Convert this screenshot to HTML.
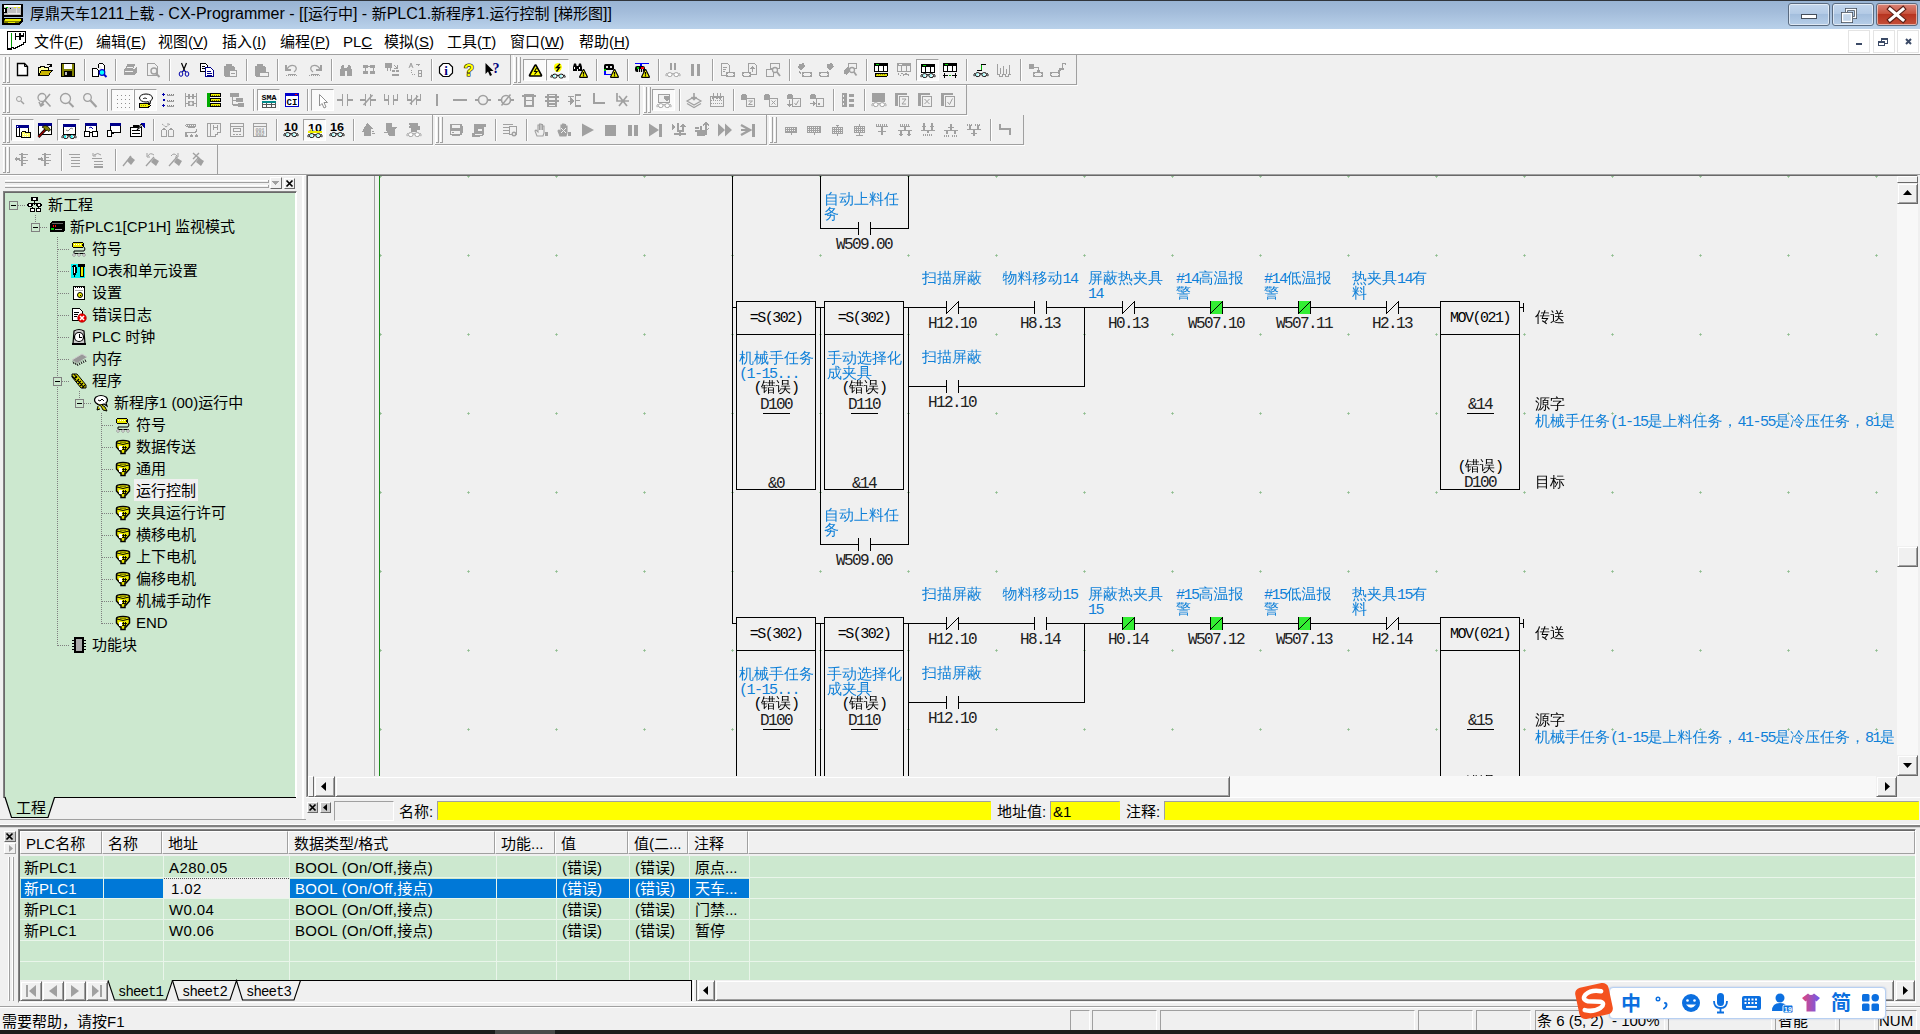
<!DOCTYPE html><html lang="zh-CN"><head><meta charset="utf-8"><title>CX-Programmer</title><style>
html,body{margin:0;padding:0;}
body{width:1920px;height:1034px;overflow:hidden;position:relative;background:#f0f0f0;
 font-family:"Liberation Sans","Noto Sans CJK SC",sans-serif;font-size:15px;color:#000;}
div,svg{position:absolute;box-sizing:border-box;}
.t{white-space:nowrap;line-height:1;}
.ui{font-family:"Liberation Sans","Noto Sans CJK SC",sans-serif;font-size:15px;}
.ss{font-family:"Liberation Mono","WenQuanYi Zen Hei",monospace;font-size:15px;letter-spacing:-1.5px;line-height:15px;}
.ss.k{font-size:15px;letter-spacing:0;}
.l{font-family:"Liberation Mono",monospace;font-size:15px;letter-spacing:-1.5px;}
.ad{font-family:"Liberation Mono","WenQuanYi Zen Hei",monospace;font-size:16px;letter-spacing:-1.6px;line-height:15px;color:#202020;}
.cm{font-family:"Liberation Mono","WenQuanYi Zen Hei",monospace;font-size:15px;line-height:15px;color:#1080d8;}
u{text-decoration:underline;text-underline-offset:1px;}
svg{overflow:visible;}
</style></head><body>
<div style="left:0px;top:0px;width:1920px;height:29px;background:linear-gradient(#98b3d3 0%,#a3bcda 40%,#b9d1ea 100%);"></div>
<div style="left:0px;top:0px;width:1920px;height:1px;background:#30343a;"></div>
<svg style="left:2px;top:3px" width="22" height="22" viewBox="0 0 22 22" shape-rendering="crispEdges">
<rect x="1" y="2" width="19" height="11" fill="#c0c0c0" stroke="#000" stroke-width="2"/>
<rect x="2" y="2" width="17" height="2" fill="#fff"/><rect x="2" y="1" width="16" height="1" fill="#000"/>
<rect x="4" y="4" width="2" height="1" fill="#0c0"/><rect x="12" y="4" width="2" height="1" fill="#ee0"/><rect x="16" y="4" width="2" height="1" fill="#ee0"/>
<rect x="2" y="5" width="3" height="5" fill="#000"/><rect x="2" y="6" width="1" height="3" fill="#fff"/><rect x="8" y="5" width="1" height="1" fill="#000"/>
<rect x="6" y="10" width="12" height="1" fill="#e8e8e8"/><rect x="14" y="5" width="1" height="5" fill="#e0e0e0"/>
<polygon points="1,16 20,16 20,18 17,21 1,21" fill="#808000" stroke="#000" stroke-width="2"/>
<rect x="3" y="16" width="16" height="2" fill="#ee0"/><rect x="6" y="19" width="7" height="1" fill="#ee0"/>
<rect x="0" y="12" width="2" height="5" fill="#000"/>
</svg>
<div class="t ui" style="left:30px;top:5px;height:18px;line-height:18px;font-size:15px;">厚鼎天车<span style="font-size:16px">1211</span>上载 <span style="font-size:16px">- CX-Programmer - [[</span>运行中<span style="font-size:16px">] - </span>新<span style="font-size:16px">PLC1.</span>新程序<span style="font-size:16px">1.</span>运行控制 <span style="font-size:16px">[</span>梯形图<span style="font-size:16px">]]</span></div>
<div style="left:1788px;top:3px;width:42px;height:23px;background:linear-gradient(#c3d6ec 0%,#b4cbe6 45%,#a3bedd 50%,#b7cee8 100%);border:1px solid #5a6b80;border-radius:3px;box-shadow:inset 0 0 0 1px rgba(255,255,255,.55);"></div>
<div style="left:1832px;top:3px;width:42px;height:23px;background:linear-gradient(#c3d6ec 0%,#b4cbe6 45%,#a3bedd 50%,#b7cee8 100%);border:1px solid #5a6b80;border-radius:3px;box-shadow:inset 0 0 0 1px rgba(255,255,255,.55);"></div>
<div style="left:1876px;top:3px;width:42px;height:23px;background:linear-gradient(#d9867a 0%,#c9543f 45%,#b73420 50%,#c4503a 100%);border:1px solid #5a6b80;border-radius:3px;box-shadow:inset 0 0 0 1px rgba(255,255,255,.55);"></div>
<svg style="left:1788px;top:3px" width="130" height="23" viewBox="0 0 130 23">
<rect x="13.5" y="11.5" width="15" height="4" fill="#fff" stroke="#454f5c" stroke-width="1"/>
<rect x="58.500" y="6.500" width="9" height="8" fill="none" stroke="#454f5c" stroke-width="3"/><rect x="58.500" y="6.500" width="9" height="8" fill="none" stroke="#fff" stroke-width="1.4"/>
<rect x="54.500" y="10.500" width="9" height="8" fill="#b4cbe6" stroke="#454f5c" stroke-width="3"/><rect x="54.500" y="10.500" width="9" height="8" fill="#c4d6ea" stroke="#fff" stroke-width="1.4"/>
<path d="M102 6 L115 17 M115 6 L102 17" stroke="#5b2018" stroke-width="5.2" stroke-linecap="square"/>
<path d="M102 6 L115 17 M115 6 L102 17" stroke="#fff" stroke-width="3" stroke-linecap="square"/>
</svg>
<div style="left:0px;top:29px;width:1920px;height:25px;background:#fff;"></div>
<div style="left:0px;top:54px;width:1920px;height:1px;background:#a0a0a0;"></div>
<svg style="left:7px;top:31px" width="19" height="19" viewBox="0 0 19 19" shape-rendering="crispEdges">
<path d="M0.500 0.500 H18.500 V11.500 H16.500 V13.500 H14.500 V14.500 H12.500 V15.500 H10.500 V16.500 H8.500 V17.500 H6.500 V16.500 H4.500 V18.500 H0.500 Z" fill="#fff" stroke="#000" stroke-width="1"/>
<rect x="4" y="2" width="1" height="14" fill="#090"/>
<rect x="8" y="2" width="1" height="7" fill="#000"/><rect x="12" y="2" width="2" height="7" fill="#000"/><rect x="8" y="5" width="5" height="1" fill="#000"/>
<rect x="13" y="4" width="4" height="2" fill="#000"/><rect x="16" y="2" width="1" height="4" fill="#000"/>
<rect x="0" y="17" width="5" height="2" fill="#000"/><rect x="6" y="17" width="3" height="1" fill="#000"/>
</svg>
<div class="t ui" style="left:34px;top:33px;height:18px;line-height:18px;">文件(<u>F</u>)</div>
<div class="t ui" style="left:96px;top:33px;height:18px;line-height:18px;">编辑(<u>E</u>)</div>
<div class="t ui" style="left:158px;top:33px;height:18px;line-height:18px;">视图(<u>V</u>)</div>
<div class="t ui" style="left:222px;top:33px;height:18px;line-height:18px;">插入(<u>I</u>)</div>
<div class="t ui" style="left:280px;top:33px;height:18px;line-height:18px;">编程(<u>P</u>)</div>
<div class="t ui" style="left:343px;top:33px;height:18px;line-height:18px;">PL<u>C</u></div>
<div class="t ui" style="left:384px;top:33px;height:18px;line-height:18px;">模拟(<u>S</u>)</div>
<div class="t ui" style="left:447px;top:33px;height:18px;line-height:18px;">工具(<u>T</u>)</div>
<div class="t ui" style="left:510px;top:33px;height:18px;line-height:18px;">窗口(<u>W</u>)</div>
<div class="t ui" style="left:579px;top:33px;height:18px;line-height:18px;">帮助(<u>H</u>)</div>
<div style="left:1848px;top:30px;width:22px;height:23px;background:#fff;border:1px solid #e4e4e4;"></div>
<div style="left:1873px;top:30px;width:22px;height:23px;background:#fff;border:1px solid #e4e4e4;"></div>
<div style="left:1897px;top:30px;width:22px;height:23px;background:#fff;border:1px solid #e4e4e4;"></div>
<svg style="left:1848px;top:30px" width="72" height="23" viewBox="0 0 72 23" shape-rendering="crispEdges">
<rect x="8" y="13" width="6" height="2" fill="#3b4a66"/>
<rect x="33.500" y="8.500" width="6" height="5" fill="none" stroke="#3b4a66"/><rect x="33" y="8" width="7" height="2" fill="#3b4a66"/>
<rect x="30.500" y="11.500" width="6" height="4" fill="#fff" stroke="#3b4a66"/><rect x="30" y="11" width="7" height="2" fill="#3b4a66"/>
<path d="M58 9 L63 14 M63 9 L58 14" stroke="#3b4a66" stroke-width="2" shape-rendering="auto"/>
</svg>
<div style="left:510px;top:55px;width:1px;height:30px;background:#a0a0a0;"></div>
<div style="left:2px;top:84px;width:509px;height:1px;background:#a0a0a0;"></div>
<div style="left:2px;top:85px;width:510px;height:1px;background:#fff;"></div>
<div style="left:3px;top:57px;width:1px;height:25px;background:#fff;"></div>
<div style="left:5px;top:57px;width:1px;height:26px;background:#a0a0a0;"></div>
<div style="left:3px;top:82px;width:3px;height:1px;background:#a0a0a0;"></div>
<div style="left:7px;top:57px;width:1px;height:25px;background:#fff;"></div>
<div style="left:9px;top:57px;width:1px;height:26px;background:#a0a0a0;"></div>
<div style="left:7px;top:82px;width:3px;height:1px;background:#a0a0a0;"></div>
<svg style="left:14px;top:62px" width="16" height="16" viewBox="0 0 16 16" shape-rendering="crispEdges"><path d="M3.500 1.500 H10.500 L13.500 4.500 V13.500 H3.500 Z" fill="#fff" stroke="#000" stroke-width="1.400" shape-rendering="auto"/><path d="M10.500 1.500 V4.500 H13.500" fill="none" stroke="#000" shape-rendering="auto"/></svg>
<svg style="left:37px;top:62px" width="16" height="16" viewBox="0 0 16 16" shape-rendering="crispEdges"><path d="M1.500 13.500 V5.500 H3 L4 4.500 H7 L8 5.500 H11.500 V8" fill="#ffffa0" stroke="#000"/><path d="M1.500 13.500 L4.500 8.500 H15 L11.500 13.500 Z" fill="#c8b400" stroke="#000"/><path d="M10 3 Q12.500 1 14 3.500 M14.500 1.500 V4 H12" fill="none" stroke="#000"/></svg>
<svg style="left:60px;top:62px" width="16" height="16" viewBox="0 0 16 16" shape-rendering="crispEdges"><rect x="1.500" y="1.500" width="13" height="13" fill="#808000" stroke="#000"/><rect x="4" y="2" width="8" height="5" fill="#fff"/><rect x="4" y="9" width="8" height="5" fill="#000"/><rect x="5" y="10" width="2" height="3" fill="#c0c0c0"/></svg>
<div style="left:84px;top:59px;width:1px;height:22px;background:#a0a0a0;"></div>
<div style="left:85px;top:59px;width:1px;height:22px;background:#fff;"></div>
<svg style="left:91px;top:62px" width="16" height="16" viewBox="0 0 16 16" shape-rendering="crispEdges"><path d="M1.500 6.500 H5.500 L7.500 8.500 V14.500 H1.500 Z" fill="#fff" stroke="#000"/><path d="M7.500 1.500 H11.500 L13.500 3.500 V9 M7.500 1.500 V6" fill="#fff" stroke="#000"/><circle cx="11" cy="10.500" r="2.800" fill="#0ff" stroke="#00c" stroke-width="1.2" shape-rendering="auto"/><path d="M13 12.500 L15.500 15" stroke="#00c" stroke-width="2" shape-rendering="auto"/></svg>
<div style="left:115px;top:59px;width:1px;height:22px;background:#a0a0a0;"></div>
<div style="left:116px;top:59px;width:1px;height:22px;background:#fff;"></div>
<svg style="left:122px;top:62px" width="16" height="16" viewBox="0 0 16 16" shape-rendering="crispEdges"><path d="M4 6 L6 2 H13 L11 6 Z" fill="#f0f0f0" stroke="#a0a0a0"/><path d="M1.500 7 H12.500 L15 5 V10 L12.500 13 H1.500 Z" fill="#a0a0a0"/><rect x="3" y="9" width="8" height="1" fill="#f0f0f0"/><path d="M5 4 H11 M6 3 H12" stroke="#a0a0a0" /></svg>
<svg style="left:145px;top:62px" width="16" height="16" viewBox="0 0 16 16" shape-rendering="crispEdges"><path d="M2.500 1.500 H9.500 L12.500 4.500 V13.500 H2.500 Z" fill="#f0f0f0" stroke="#a0a0a0"/><circle cx="9" cy="9" r="3" fill="#f0f0f0" stroke="#a0a0a0" stroke-width="1.4" shape-rendering="auto"/><path d="M11 11.500 L14.500 15" stroke="#a0a0a0" stroke-width="2" shape-rendering="auto"/></svg>
<div style="left:169px;top:59px;width:1px;height:22px;background:#a0a0a0;"></div>
<div style="left:170px;top:59px;width:1px;height:22px;background:#fff;"></div>
<svg style="left:176px;top:62px" width="16" height="16" viewBox="0 0 16 16" shape-rendering="crispEdges"><path d="M5.500 1 L9 9.500 M10.500 1 L7 9.500" stroke="#000" stroke-width="1.200" shape-rendering="auto" fill="none"/><ellipse cx="5" cy="12" rx="1.800" ry="2.300" fill="none" stroke="#00a" stroke-width="1" shape-rendering="auto"/><ellipse cx="11" cy="12" rx="1.800" ry="2.300" fill="none" stroke="#00a" stroke-width="1" shape-rendering="auto"/><path d="M6 10 L8 8 L10 10" stroke="#00a" fill="none" shape-rendering="auto"/></svg>
<svg style="left:199px;top:62px" width="16" height="16" viewBox="0 0 16 16" shape-rendering="crispEdges"><path d="M1.500 1.500 H6.500 L8.500 3.500 V9.500 H1.500 Z" fill="#fff" stroke="#000"/><path d="M3 4 H6 M3 6 H7" stroke="#000"/><path d="M6.500 5.500 H11.500 L14.500 8.500 V14.500 H6.500 Z" fill="#fff" stroke="#008"/><path d="M8 9 H12 M8 11 H13 M8 13 H13" stroke="#008"/></svg>
<svg style="left:222px;top:62px" width="16" height="16" viewBox="0 0 16 16" shape-rendering="crispEdges"><rect x="1.500" y="3.500" width="11" height="11" rx="1" fill="#a0a0a0"/><rect x="4" y="1.500" width="6" height="3" fill="#a0a0a0"/><rect x="7.500" y="8.500" width="7" height="6" fill="#f0f0f0" stroke="#a0a0a0"/><path d="M9 11 H13" stroke="#a0a0a0"/></svg>
<div style="left:246px;top:59px;width:1px;height:22px;background:#a0a0a0;"></div>
<div style="left:247px;top:59px;width:1px;height:22px;background:#fff;"></div>
<svg style="left:253px;top:62px" width="16" height="16" viewBox="0 0 16 16" shape-rendering="crispEdges"><rect x="1.500" y="3.500" width="11" height="11" rx="1" fill="#a0a0a0"/><rect x="4" y="1.500" width="6" height="3" fill="#a0a0a0"/><rect x="6.500" y="10.500" width="9" height="4" rx="1" fill="#f0f0f0" stroke="#a0a0a0"/></svg>
<div style="left:277px;top:59px;width:1px;height:22px;background:#a0a0a0;"></div>
<div style="left:278px;top:59px;width:1px;height:22px;background:#fff;"></div>
<svg style="left:284px;top:62px" width="16" height="16" viewBox="0 0 16 16" shape-rendering="crispEdges"><path d="M3 7 Q6 2 11 4 Q14 7 10 10" fill="none" stroke="#a0a0a0" stroke-width="1.3" shape-rendering="auto"/><path d="M2 3 V8 H7" fill="none" stroke="#a0a0a0" stroke-width="1.3"/><path d="M2 13.500 H14" stroke="#a0a0a0" stroke-dasharray="1 1"/><path d="M4 12.500 H12" stroke="#a0a0a0"/></svg>
<svg style="left:307px;top:62px" width="16" height="16" viewBox="0 0 16 16" shape-rendering="crispEdges"><path d="M13 7 Q10 2 5 4 Q2 7 6 10" fill="none" stroke="#a0a0a0" stroke-width="1.3" shape-rendering="auto"/><path d="M14 3 V8 H9" fill="none" stroke="#a0a0a0" stroke-width="1.3"/><path d="M2 13.500 H14" stroke="#a0a0a0" stroke-dasharray="1 1"/><path d="M4 12.500 H12" stroke="#a0a0a0"/></svg>
<div style="left:331px;top:59px;width:1px;height:22px;background:#a0a0a0;"></div>
<div style="left:332px;top:59px;width:1px;height:22px;background:#fff;"></div>
<svg style="left:338px;top:62px" width="16" height="16" viewBox="0 0 16 16" shape-rendering="crispEdges"><path d="M2 14 V8 L4 3 H6 L7 8 V14 Z M9 14 V8 L10 3 H12 L14 8 V14 Z" fill="#a0a0a0"/><rect x="6" y="6" width="4" height="3" fill="#a0a0a0"/></svg>
<svg style="left:361px;top:62px" width="16" height="16" viewBox="0 0 16 16" shape-rendering="crispEdges"><rect x="2" y="3" width="5" height="3" rx="1" fill="#a0a0a0"/><rect x="9" y="3" width="5" height="3" rx="1" fill="#a0a0a0"/><path d="M7 4.500 H9" stroke="#a0a0a0"/><rect x="2" y="9" width="5" height="3" rx="1" fill="#a0a0a0"/><rect x="9" y="9" width="5" height="3" rx="1" fill="#a0a0a0"/><path d="M4 6 V9 M12 6 V9" stroke="#a0a0a0"/></svg>
<svg style="left:384px;top:62px" width="16" height="16" viewBox="0 0 16 16" shape-rendering="crispEdges"><rect x="1" y="1" width="7" height="5" rx="1" fill="#a0a0a0"/><path d="M3 6 V9 M6 6 V9" stroke="#a0a0a0"/><rect x="8" y="8" width="3" height="2" fill="#a0a0a0"/><rect x="12" y="8" width="3" height="2" fill="#a0a0a0"/><rect x="8" y="12" width="7" height="2" fill="#a0a0a0"/><path d="M10 3 L13 6 M13 3 V6 H10" stroke="#a0a0a0" fill="none"/></svg>
<svg style="left:407px;top:62px" width="16" height="16" viewBox="0 0 16 16" shape-rendering="crispEdges"><path d="M2 6 L4 1 L6 6 M3 4 H5" stroke="#a0a0a0" fill="none" shape-rendering="auto"/><path d="M4 8 Q4 13 9 13" stroke="#a0a0a0" fill="none" stroke-dasharray="1 1"/><path d="M9 2 L13 2 L11 4" stroke="#a0a0a0" fill="none"/><path d="M11.500 8 V14 H14 V11 H11.500 M11.500 8 H14 V11" stroke="#a0a0a0" fill="none"/></svg>
<div style="left:431px;top:59px;width:1px;height:22px;background:#a0a0a0;"></div>
<div style="left:432px;top:59px;width:1px;height:22px;background:#fff;"></div>
<svg style="left:438px;top:62px" width="16" height="16" viewBox="0 0 16 16" shape-rendering="crispEdges"><polygon points="5,1.500 11,1.500 14.500,5 14.500,11 11,14.500 5,14.500 1.500,11 1.500,5" fill="#fff" stroke="#000" stroke-width="1.200" shape-rendering="auto"/><text x="8" y="12.500" font-family="Liberation Serif,serif" font-size="13" font-weight="bold" text-anchor="middle" fill="#000080">i</text></svg>
<svg style="left:461px;top:62px" width="16" height="16" viewBox="0 0 16 16" shape-rendering="crispEdges"><text x="8" y="14" font-family="Liberation Sans,sans-serif" font-size="17" font-weight="bold" text-anchor="middle" fill="#ff0" stroke="#000" stroke-width="1.100" paint-order="stroke" shape-rendering="auto">?</text></svg>
<svg style="left:484px;top:62px" width="16" height="16" viewBox="0 0 16 16" shape-rendering="crispEdges"><path d="M1.500 1 V12 L4 9.500 L6 14 L8 13 L6 9 H9.500 Z" fill="#000" shape-rendering="auto"/><text x="12" y="11" font-family="Liberation Serif,serif" font-size="14" font-weight="bold" text-anchor="middle" fill="#000080">?</text></svg>
<div style="left:1076px;top:55px;width:1px;height:30px;background:#a0a0a0;"></div>
<div style="left:513px;top:84px;width:564px;height:1px;background:#a0a0a0;"></div>
<div style="left:513px;top:85px;width:565px;height:1px;background:#fff;"></div>
<div style="left:513px;top:55px;width:1px;height:29px;background:#fff;"></div>
<div style="left:514px;top:57px;width:1px;height:25px;background:#fff;"></div>
<div style="left:516px;top:57px;width:1px;height:26px;background:#a0a0a0;"></div>
<div style="left:514px;top:82px;width:3px;height:1px;background:#a0a0a0;"></div>
<div style="left:518px;top:57px;width:1px;height:25px;background:#fff;"></div>
<div style="left:520px;top:57px;width:1px;height:26px;background:#a0a0a0;"></div>
<div style="left:518px;top:82px;width:3px;height:1px;background:#a0a0a0;"></div>
<div style="left:523px;top:59px;width:23px;height:22px;background:#fafafa;border:1px solid;border-color:#a0a0a0 #fff #fff #a0a0a0;"></div>
<svg style="left:527px;top:63px" width="16" height="16" viewBox="0 0 16 16" shape-rendering="crispEdges"><polygon points="8.500,2.500 14,12.500 3,12.500" fill="#ff0" stroke="#000" stroke-width="2.600" stroke-linejoin="round" shape-rendering="auto"/><polygon points="8.500,3 13.500,12.200 3.500,12.200" fill="#ff0" shape-rendering="auto"/><path d="M9.500 5 L7.500 8.500 H10 L7.500 11.500" stroke="#000" stroke-width="1.100" fill="none" shape-rendering="auto"/></svg>
<div style="left:546px;top:59px;width:23px;height:22px;background:#fafafa;border:1px solid;border-color:#a0a0a0 #fff #fff #a0a0a0;"></div>
<svg style="left:550px;top:63px" width="16" height="16" viewBox="0 0 16 16" shape-rendering="crispEdges"><path d="M5 1 L8 0 L11 1 L12 4 L11 7 L9 9 L6 9 L4 6 L4 3 Z" fill="#ff0" shape-rendering="auto"/><path d="M10 1 L6.500 4.500 H9.500 L6.500 8.500" stroke="#000" stroke-width="1.400" fill="none" shape-rendering="auto"/><path d="M1.200 14.7 Q0.200 12.5 2 11.8 M14.800 14.7 Q15.800 12.5 14 11.8" stroke="#000" stroke-width="1" fill="none" shape-rendering="auto"/><rect x="2.500" y="11.2" width="4.500" height="3.800" rx="1.700" fill="#fff" stroke="#000" stroke-width="1" shape-rendering="auto"/><rect x="9" y="11.2" width="4.500" height="3.800" rx="1.700" fill="#fff" stroke="#000" stroke-width="1" shape-rendering="auto"/><rect x="3.300" y="12.0" width="1.800" height="2.200" fill="#9ff" shape-rendering="auto"/><rect x="9.800" y="12.0" width="1.800" height="2.200" fill="#9ff" shape-rendering="auto"/><path d="M7 12.5 Q8 11.7 9 12.5" stroke="#000" stroke-width="1" fill="none" shape-rendering="auto"/></svg>
<svg style="left:572px;top:62px" width="16" height="16" viewBox="0 0 16 16" shape-rendering="crispEdges"><path d="M1 9 V5 L2 1.500 H4 L5 5 V9 Z M6 9 V5 L7 1.500 H9 L10 5 V9 Z" fill="#000" shape-rendering="auto"/><rect x="4" y="3.500" width="3" height="3" fill="#000"/><rect x="2" y="5" width="1" height="2" fill="#fff"/><rect x="7" y="5" width="1" height="2" fill="#fff"/><polygon points="11.5,8 15,15 8,15" fill="#ff0" stroke="#000" stroke-width="2" stroke-linejoin="round" shape-rendering="auto"/><polygon points="11.5,8.3 14.7,14.8 8.3,14.8" fill="#ff0" shape-rendering="auto"/><path d="M11.5 10 V12.7" stroke="#000" stroke-width="1.400" shape-rendering="auto"/><rect x="10.8" y="13.2" width="1.400" height="1.200" fill="#000" shape-rendering="auto"/></svg>
<div style="left:596px;top:59px;width:1px;height:22px;background:#a0a0a0;"></div>
<div style="left:597px;top:59px;width:1px;height:22px;background:#fff;"></div>
<svg style="left:603px;top:62px" width="16" height="16" viewBox="0 0 16 16" shape-rendering="crispEdges"><rect x="1" y="2" width="10" height="6" rx="1.500" fill="#000" shape-rendering="auto"/><rect x="2.500" y="3.500" width="2.500" height="2.500" fill="#ddd"/><rect x="6.500" y="3.500" width="2.500" height="2.500" fill="#ddd"/><rect x="1" y="7" width="2" height="1.500" fill="#0c0"/><path d="M2 8.500 V12.500 H8" stroke="#00f" stroke-width="1.200" fill="none"/><polygon points="11.5,8 15,15 8,15" fill="#ff0" stroke="#000" stroke-width="2" stroke-linejoin="round" shape-rendering="auto"/><polygon points="11.5,8.3 14.7,14.8 8.3,14.8" fill="#ff0" shape-rendering="auto"/><path d="M11.5 10 V12.7" stroke="#000" stroke-width="1.400" shape-rendering="auto"/><rect x="10.8" y="13.2" width="1.400" height="1.200" fill="#000" shape-rendering="auto"/></svg>
<div style="left:627px;top:59px;width:1px;height:22px;background:#a0a0a0;"></div>
<div style="left:628px;top:59px;width:1px;height:22px;background:#fff;"></div>
<svg style="left:634px;top:62px" width="16" height="16" viewBox="0 0 16 16" shape-rendering="crispEdges"><path d="M1 1.500 H15" stroke="#00f" stroke-width="1.200"/><path d="M7 1.500 V4" stroke="#00f" stroke-width="1.200"/><rect x="1" y="4" width="10" height="6" rx="2.200" fill="#000" shape-rendering="auto"/><rect x="3" y="5" width="2" height="1.500" fill="#0c0"/><rect x="7" y="5" width="2.500" height="1.500" fill="#f00"/><rect x="4" y="7" width="1" height="2.500" fill="#ccc"/><rect x="6" y="7" width="1" height="2.500" fill="#ccc"/><rect x="8" y="7" width="1" height="2.500" fill="#ccc"/><polygon points="11.5,8 15,15 8,15" fill="#ff0" stroke="#000" stroke-width="2" stroke-linejoin="round" shape-rendering="auto"/><polygon points="11.5,8.3 14.7,14.8 8.3,14.8" fill="#ff0" shape-rendering="auto"/><path d="M11.5 10 V12.7" stroke="#000" stroke-width="1.400" shape-rendering="auto"/><rect x="10.8" y="13.2" width="1.400" height="1.200" fill="#000" shape-rendering="auto"/></svg>
<div style="left:658px;top:59px;width:1px;height:22px;background:#a0a0a0;"></div>
<div style="left:659px;top:59px;width:1px;height:22px;background:#fff;"></div>
<svg style="left:665px;top:62px" width="16" height="16" viewBox="0 0 16 16" shape-rendering="crispEdges"><rect x="5" y="1" width="2" height="7" fill="#a0a0a0"/><rect x="9" y="1" width="2" height="7" fill="#a0a0a0"/><path d="M1.200 14.2 Q0.200 12 2 11.3 M14.800 14.2 Q15.800 12 14 11.3" stroke="#a0a0a0" stroke-width="1" fill="none" shape-rendering="auto"/><rect x="2.500" y="10.7" width="4.500" height="3.800" rx="1.700" fill="#fff" stroke="#a0a0a0" stroke-width="1" shape-rendering="auto"/><rect x="9" y="10.7" width="4.500" height="3.800" rx="1.700" fill="#fff" stroke="#a0a0a0" stroke-width="1" shape-rendering="auto"/><path d="M7 12 Q8 11.2 9 12" stroke="#a0a0a0" stroke-width="1" fill="none" shape-rendering="auto"/></svg>
<svg style="left:688px;top:62px" width="16" height="16" viewBox="0 0 16 16" shape-rendering="crispEdges"><rect x="3" y="2" width="3" height="12" fill="#a0a0a0"/><rect x="9" y="2" width="3" height="12" fill="#a0a0a0"/></svg>
<div style="left:712px;top:59px;width:1px;height:22px;background:#a0a0a0;"></div>
<div style="left:713px;top:59px;width:1px;height:22px;background:#fff;"></div>
<svg style="left:719px;top:62px" width="16" height="16" viewBox="0 0 16 16" shape-rendering="crispEdges"><path d="M2.500 1.500 H8.500 L10.500 3.500 V13.500 H2.500 Z" fill="#f0f0f0" stroke="#a0a0a0" stroke-width="1.400"/><path d="M4 5 H8 M4 7 H7 M4 9 H6" stroke="#a0a0a0"/><rect x="7.500" y="10.500" width="8" height="4" rx="2" fill="#f0f0f0" stroke="#a0a0a0" stroke-width="1.400"/></svg>
<svg style="left:742px;top:62px" width="16" height="16" viewBox="0 0 16 16" shape-rendering="crispEdges"><path d="M6.500 1.500 H12.500 L14.500 3.500 V12.500 H6.500 Z" fill="#f0f0f0" stroke="#a0a0a0" stroke-width="1.400"/><path d="M10.500 10 V5 M8.500 7 L10.500 5 L12.500 7" stroke="#a0a0a0" fill="none"/><rect x="0.500" y="10.500" width="8" height="4" rx="2" fill="#f0f0f0" stroke="#a0a0a0" stroke-width="1.400"/></svg>
<svg style="left:765px;top:62px" width="16" height="16" viewBox="0 0 16 16" shape-rendering="crispEdges"><rect x="1.500" y="7.500" width="7" height="7" fill="#f0f0f0" stroke="#a0a0a0" stroke-width="1.400"/><rect x="5.500" y="1.500" width="9" height="5" rx="1" fill="#f0f0f0" stroke="#a0a0a0" stroke-width="1.400"/><circle cx="10" cy="8" r="2.500" fill="#f0f0f0" stroke="#a0a0a0" stroke-width="1.300" shape-rendering="auto"/><path d="M12 10 L15 14" stroke="#a0a0a0" stroke-width="1.800" shape-rendering="auto"/></svg>
<div style="left:789px;top:59px;width:1px;height:22px;background:#a0a0a0;"></div>
<div style="left:790px;top:59px;width:1px;height:22px;background:#fff;"></div>
<svg style="left:796px;top:62px" width="16" height="16" viewBox="0 0 16 16" shape-rendering="crispEdges"><path d="M3 2 L8 1 L9 5 L5 8 L2 6 Z" fill="#a0a0a0"/><path d="M3 9 L5 12" stroke="#a0a0a0" stroke-width="1.300"/><rect x="6.500" y="10.500" width="9" height="4" rx="2" fill="#f0f0f0" stroke="#a0a0a0" stroke-width="1.400"/></svg>
<svg style="left:819px;top:62px" width="16" height="16" viewBox="0 0 16 16" shape-rendering="crispEdges"><path d="M8 2 L13 1 L15 5 L11 8 L8 6 Z" fill="#a0a0a0"/><path d="M9 9 L7 11" stroke="#a0a0a0" stroke-width="1.300"/><rect x="0.500" y="10.500" width="9" height="4" rx="2" fill="#f0f0f0" stroke="#a0a0a0" stroke-width="1.400"/></svg>
<svg style="left:842px;top:62px" width="16" height="16" viewBox="0 0 16 16" shape-rendering="crispEdges"><path d="M2 8 L6 5 L8 9 L5 13 L2 12 Z" fill="#a0a0a0"/><rect x="6.500" y="1.500" width="8" height="5" rx="1" fill="#f0f0f0" stroke="#a0a0a0" stroke-width="1.400"/><circle cx="10" cy="8" r="2.500" fill="#f0f0f0" stroke="#a0a0a0" stroke-width="1.300" shape-rendering="auto"/><path d="M12 10 L14.500 13.500" stroke="#a0a0a0" stroke-width="1.800" shape-rendering="auto"/></svg>
<div style="left:866px;top:59px;width:1px;height:22px;background:#a0a0a0;"></div>
<div style="left:867px;top:59px;width:1px;height:22px;background:#fff;"></div>
<svg style="left:873px;top:62px" width="16" height="16" viewBox="0 0 16 16" shape-rendering="crispEdges"><rect x="1.500" y="1.5" width="13" height="8" rx="1.5" fill="#fff" stroke="#000" stroke-width="1.6"/><rect x="2" y="1" width="12" height="3" fill="#000"/><rect x="3" y="2" width="3" height="1" fill="#0c0"/><path d="M5.500 4 V9 M10.500 4 V9" stroke="#000" stroke-width="1"/><path d="M2 11 H14 V14 Q8 16 2 14 Z" fill="#dd0" stroke="#000"/><path d="M3 12.500 H13" stroke="#880" stroke-dasharray="1 1"/></svg>
<svg style="left:896px;top:62px" width="16" height="16" viewBox="0 0 16 16" shape-rendering="crispEdges"><rect x="1.500" y="1.5" width="13" height="8" rx="1.5" fill="#f0f0f0" stroke="#a0a0a0" stroke-width="1.6"/><rect x="2" y="1" width="12" height="3" fill="#a0a0a0"/><rect x="3" y="2" width="3" height="1" fill="#f0f0f0"/><path d="M5.500 4 V9 M10.500 4 V9" stroke="#a0a0a0" stroke-width="1"/><path d="M2 11 L4 14 L6 11 L8 14 L10 11 L12 14 L14 11" stroke="#a0a0a0" fill="none" stroke-dasharray="2 1"/></svg>
<div style="left:916px;top:59px;width:23px;height:22px;background:#fafafa;border:1px solid;border-color:#a0a0a0 #fff #fff #a0a0a0;"></div>
<svg style="left:920px;top:63px" width="16" height="16" viewBox="0 0 16 16" shape-rendering="crispEdges"><rect x="1.500" y="1.5" width="13" height="8" rx="1.5" fill="#fff" stroke="#000" stroke-width="1.6"/><rect x="2" y="1" width="12" height="3" fill="#000"/><rect x="3" y="2" width="3" height="1" fill="#0c0"/><path d="M5.500 4 V9 M10.500 4 V9" stroke="#000" stroke-width="1"/><path d="M1.200 14.2 Q0.200 12 2 11.3 M14.800 14.2 Q15.800 12 14 11.3" stroke="#000" stroke-width="1" fill="none" shape-rendering="auto"/><rect x="2.500" y="10.7" width="4.500" height="3.800" rx="1.700" fill="#fff" stroke="#000" stroke-width="1" shape-rendering="auto"/><rect x="9" y="10.7" width="4.500" height="3.800" rx="1.700" fill="#fff" stroke="#000" stroke-width="1" shape-rendering="auto"/><rect x="3.300" y="11.5" width="1.800" height="2.200" fill="#9ff" shape-rendering="auto"/><rect x="9.800" y="11.5" width="1.800" height="2.200" fill="#9ff" shape-rendering="auto"/><path d="M7 12 Q8 11.2 9 12" stroke="#000" stroke-width="1" fill="none" shape-rendering="auto"/></svg>
<svg style="left:942px;top:62px" width="16" height="16" viewBox="0 0 16 16" shape-rendering="crispEdges"><rect x="1.500" y="1.5" width="13" height="8" rx="1.5" fill="#fff" stroke="#000" stroke-width="1.6"/><rect x="2" y="1" width="12" height="3" fill="#000"/><rect x="3" y="2" width="3" height="1" fill="#0c0"/><path d="M5.500 4 V9 M10.500 4 V9" stroke="#000" stroke-width="1"/><path d="M2 13.500 H6 M10 13.500 H14" stroke="#000"/><path d="M7 13.500 H9" stroke="#0a0"/><path d="M3 11.500 L1.500 13.500 L3 15.500 M13 11.500 L14.500 13.500 L13 15.500" stroke="#000" fill="none"/></svg>
<div style="left:966px;top:59px;width:1px;height:22px;background:#a0a0a0;"></div>
<div style="left:967px;top:59px;width:1px;height:22px;background:#fff;"></div>
<svg style="left:973px;top:62px" width="16" height="16" viewBox="0 0 16 16" shape-rendering="crispEdges"><path d="M4 8.500 H8 M8.500 9 V2" stroke="#000" fill="none"/><path d="M8.500 2.500 V8" stroke="#0a0"/><path d="M9 2.500 H13" stroke="#000"/><path d="M1.200 14.2 Q0.200 12 2 11.3 M14.800 14.2 Q15.800 12 14 11.3" stroke="#000" stroke-width="1" fill="none" shape-rendering="auto"/><rect x="2.500" y="10.7" width="4.500" height="3.800" rx="1.700" fill="#fff" stroke="#000" stroke-width="1" shape-rendering="auto"/><rect x="9" y="10.7" width="4.500" height="3.800" rx="1.700" fill="#fff" stroke="#000" stroke-width="1" shape-rendering="auto"/><rect x="3.300" y="11.5" width="1.800" height="2.200" fill="#9ff" shape-rendering="auto"/><rect x="9.800" y="11.5" width="1.800" height="2.200" fill="#9ff" shape-rendering="auto"/><path d="M7 12 Q8 11.2 9 12" stroke="#000" stroke-width="1" fill="none" shape-rendering="auto"/></svg>
<svg style="left:996px;top:62px" width="16" height="16" viewBox="0 0 16 16" shape-rendering="crispEdges"><path d="M1.500 2 V12 M4.500 6 V12 M7.500 4 V12 M10.500 7 V12 M13.500 3 V12" stroke="#a0a0a0"/><path d="M1 12.500 H3 V14.500 H6 V12.500 H9 V14.500 H12 V12.500 H15" stroke="#a0a0a0" fill="none"/></svg>
<div style="left:1020px;top:59px;width:1px;height:22px;background:#a0a0a0;"></div>
<div style="left:1021px;top:59px;width:1px;height:22px;background:#fff;"></div>
<svg style="left:1027px;top:62px" width="16" height="16" viewBox="0 0 16 16" shape-rendering="crispEdges"><path d="M2 7 V4 Q2 1.500 4.500 1.500 Q7 1.500 7 4 V7 Z" fill="#a0a0a0"/><path d="M7 5.500 H11.500 V10" stroke="#a0a0a0" fill="none"/><rect x="6.500" y="10.500" width="9" height="4" rx="2" fill="#f0f0f0" stroke="#a0a0a0" stroke-width="1.400"/><rect x="10" y="8" width="3" height="3" fill="#a0a0a0"/></svg>
<svg style="left:1050px;top:62px" width="16" height="16" viewBox="0 0 16 16" shape-rendering="crispEdges"><path d="M9 8 V6 H14 V8 Z" fill="#a0a0a0"/><path d="M12.500 6 V3 Q12.500 1.500 14 1.500 Q15.500 1.500 15.500 3" stroke="#a0a0a0" fill="none" stroke-width="1.300"/><rect x="0.500" y="10.500" width="9" height="4" rx="2" fill="#f0f0f0" stroke="#a0a0a0" stroke-width="1.400"/><path d="M8 10 L10 8" stroke="#a0a0a0" stroke-width="1.500"/></svg>
<div style="left:639px;top:85px;width:1px;height:30px;background:#a0a0a0;"></div>
<div style="left:2px;top:114px;width:638px;height:1px;background:#a0a0a0;"></div>
<div style="left:2px;top:115px;width:639px;height:1px;background:#fff;"></div>
<div style="left:3px;top:87px;width:1px;height:25px;background:#fff;"></div>
<div style="left:5px;top:87px;width:1px;height:26px;background:#a0a0a0;"></div>
<div style="left:3px;top:112px;width:3px;height:1px;background:#a0a0a0;"></div>
<div style="left:7px;top:87px;width:1px;height:25px;background:#fff;"></div>
<div style="left:9px;top:87px;width:1px;height:26px;background:#a0a0a0;"></div>
<div style="left:7px;top:112px;width:3px;height:1px;background:#a0a0a0;"></div>
<svg style="left:13px;top:92px" width="16" height="16" viewBox="0 0 16 16" shape-rendering="crispEdges"><circle cx="6" cy="7" r="2.500" fill="#f0f0f0" stroke="#a0a0a0" shape-rendering="auto"/><path d="M8 9 L11 12" stroke="#a0a0a0" stroke-width="1.500" shape-rendering="auto"/></svg>
<svg style="left:36px;top:92px" width="16" height="16" viewBox="0 0 16 16" shape-rendering="crispEdges"><circle cx="6" cy="5.500" r="4" fill="#f0f0f0" stroke="#a0a0a0" stroke-width="1.300" shape-rendering="auto"/><path d="M9 8.500 L14.500 14.500 M14 2 L4 14 M3 10 L5 14 L8 12" stroke="#a0a0a0" stroke-width="1.600" fill="none" shape-rendering="auto"/></svg>
<svg style="left:59px;top:92px" width="16" height="16" viewBox="0 0 16 16" shape-rendering="crispEdges"><circle cx="6.500" cy="6.500" r="5" fill="#f0f0f0" stroke="#a0a0a0" stroke-width="1.300" shape-rendering="auto"/><path d="M10 10.500 L14.500 15" stroke="#a0a0a0" stroke-width="2" shape-rendering="auto"/></svg>
<svg style="left:82px;top:92px" width="16" height="16" viewBox="0 0 16 16" shape-rendering="crispEdges"><circle cx="5.500" cy="5.500" r="3.800" fill="#f0f0f0" stroke="#a0a0a0" stroke-width="1.300" shape-rendering="auto"/><path d="M8.500 8.500 L14.500 15" stroke="#a0a0a0" stroke-width="2.200" shape-rendering="auto"/></svg>
<div style="left:107px;top:89px;width:1px;height:22px;background:#a0a0a0;"></div>
<div style="left:108px;top:89px;width:1px;height:22px;background:#fff;"></div>
<div style="left:111px;top:89px;width:23px;height:22px;background:#fafafa;border:1px solid;border-color:#a0a0a0 #fff #fff #a0a0a0;"></div>
<svg style="left:115px;top:93px" width="16" height="16" viewBox="0 0 16 16" shape-rendering="crispEdges"><rect x="2" y="2" width="1" height="1" fill="#909090"/><rect x="2" y="6" width="1" height="1" fill="#909090"/><rect x="2" y="10" width="1" height="1" fill="#909090"/><rect x="2" y="14" width="1" height="1" fill="#909090"/><rect x="6" y="2" width="1" height="1" fill="#909090"/><rect x="6" y="6" width="1" height="1" fill="#909090"/><rect x="6" y="10" width="1" height="1" fill="#909090"/><rect x="6" y="14" width="1" height="1" fill="#909090"/><rect x="10" y="2" width="1" height="1" fill="#909090"/><rect x="10" y="6" width="1" height="1" fill="#909090"/><rect x="10" y="10" width="1" height="1" fill="#909090"/><rect x="10" y="14" width="1" height="1" fill="#909090"/><rect x="14" y="2" width="1" height="1" fill="#909090"/><rect x="14" y="6" width="1" height="1" fill="#909090"/><rect x="14" y="10" width="1" height="1" fill="#909090"/><rect x="14" y="14" width="1" height="1" fill="#909090"/></svg>
<div style="left:134px;top:89px;width:23px;height:22px;background:#fafafa;border:1px solid;border-color:#a0a0a0 #fff #fff #a0a0a0;"></div>
<svg style="left:138px;top:93px" width="16" height="16" viewBox="0 0 16 16" shape-rendering="crispEdges"><ellipse cx="8" cy="5" rx="6.500" ry="4" fill="#fff" stroke="#000" shape-rendering="auto"/><path d="M10 8.500 L12 11 L12.500 8" fill="#fff" stroke="#000" shape-rendering="auto"/><path d="M5 5 L6 6 L7 4.500 L8 6 L9 5" stroke="#000" fill="none" stroke-width=".7" shape-rendering="auto"/><path d="M1.500 10.500 H10 L12.500 12.500 L10 14.500 H1.500 Z" fill="#ee0" stroke="#000"/><path d="M3 12.500 H9" stroke="#880" stroke-dasharray="1 1"/></svg>
<svg style="left:160px;top:92px" width="16" height="16" viewBox="0 0 16 16" shape-rendering="crispEdges"><path d="M2 2.500 L3.500 1 L5 2.500 L3.500 4 Z M2 8 L3.500 6.500 L5 8 L3.500 9.500 Z M2 13.500 L3.500 12 L5 13.500 L3.500 15 Z" fill="#00a"/><path d="M7 2.500 H15 M7 8 H15 M7 13.500 H15" stroke="#808080" stroke-dasharray="1 1"/><path d="M7 3.500 H14 M7 9 H14 M7 14.500 H14" stroke="#a0a0a0"/></svg>
<svg style="left:183px;top:92px" width="16" height="16" viewBox="0 0 16 16" shape-rendering="crispEdges"><path d="M2.500 1 V15 M13.500 1 V15 M2.500 4.500 H6 M10 4.500 H13.500 M2.500 11.500 H6 M10 11.500 H13.500" stroke="#a0a0a0" stroke-width="1.600" fill="none"/><path d="M6 2 V7 M10 2 V7 M6 9 V14 M10 9 V14 M6 4.500 H10" stroke="#a0a0a0" stroke-width="1.600"/><circle cx="8" cy="11.500" r="2" fill="#f0f0f0" stroke="#a0a0a0" shape-rendering="auto"/></svg>
<svg style="left:206px;top:92px" width="16" height="16" viewBox="0 0 16 16" shape-rendering="crispEdges"><rect x="1" y="1" width="3" height="14" fill="#0a0"/><rect x="4.500" y="1.5" width="10" height="3" fill="#ee0" stroke="#000"/><path d="M6 3 H13" stroke="#660" stroke-dasharray="1 1"/><rect x="4.500" y="6.5" width="10" height="3" fill="#ee0" stroke="#000"/><path d="M6 8 H13" stroke="#660" stroke-dasharray="1 1"/><rect x="4.500" y="11.5" width="10" height="3" fill="#ee0" stroke="#000"/><path d="M6 13 H13" stroke="#660" stroke-dasharray="1 1"/></svg>
<svg style="left:229px;top:92px" width="16" height="16" viewBox="0 0 16 16" shape-rendering="crispEdges"><rect x="1" y="1" width="9" height="4" fill="#a0a0a0"/><path d="M3.500 5 V13 M3.500 8.500 H7 M3.500 13 H9" stroke="#a0a0a0" stroke-width="1.400" fill="none"/><rect x="7" y="6" width="7" height="4" fill="#a0a0a0"/><rect x="9" y="11" width="6" height="4" fill="#a0a0a0"/></svg>
<div style="left:253px;top:89px;width:1px;height:22px;background:#a0a0a0;"></div>
<div style="left:254px;top:89px;width:1px;height:22px;background:#fff;"></div>
<div style="left:257px;top:89px;width:23px;height:22px;background:#fafafa;border:1px solid;border-color:#a0a0a0 #fff #fff #a0a0a0;"></div>
<svg style="left:261px;top:93px" width="16" height="16" viewBox="0 0 16 16" shape-rendering="crispEdges"><text x="8" y="7" font-family="Liberation Mono,monospace" font-size="8" font-weight="bold" text-anchor="middle" fill="#000" textLength="15" lengthAdjust="spacingAndGlyphs">SMA</text><rect x="1" y="8" width="14" height="2" fill="#088"/><path d="M1 11.500 H15 M1 14.500 H15 M1.500 10 V15 M5.500 10 V15 M10.500 10 V15 M14.500 10 V15" stroke="#555"/></svg>
<svg style="left:284px;top:92px" width="16" height="16" viewBox="0 0 16 16" shape-rendering="crispEdges"><rect x="1.500" y="1.500" width="13" height="13" fill="#fff" stroke="#00c" stroke-width="1.400"/><rect x="1" y="1" width="14" height="3" fill="#00c"/><rect x="11" y="1.500" width="2" height="1.500" fill="#f00"/><text x="8" y="12.500" font-family="Liberation Mono,monospace" font-size="9" font-weight="bold" text-anchor="middle" fill="#000">CI</text></svg>
<div style="left:307px;top:89px;width:1px;height:22px;background:#a0a0a0;"></div>
<div style="left:308px;top:89px;width:1px;height:22px;background:#fff;"></div>
<div style="left:311px;top:89px;width:23px;height:22px;background:#fafafa;border:1px solid;border-color:#a0a0a0 #fff #fff #a0a0a0;"></div>
<svg style="left:315px;top:93px" width="16" height="16" viewBox="0 0 16 16" shape-rendering="crispEdges"><path d="M4.500 1.500 V13 L7 10.500 L9 15 L11 14 L9 9.500 H12.500 Z" fill="#fff" stroke="#909090" shape-rendering="auto"/></svg>
<svg style="left:337px;top:92px" width="16" height="16" viewBox="0 0 16 16" shape-rendering="crispEdges"><path d="M0 8 H5 M11 8 H16" stroke="#a0a0a0" stroke-width="1.600"/><path d="M5.500 2 V14 M10.500 2 V14" stroke="#a0a0a0" stroke-width="1.800"/></svg>
<svg style="left:360px;top:92px" width="16" height="16" viewBox="0 0 16 16" shape-rendering="crispEdges"><path d="M0 8 H5 M11 8 H16" stroke="#a0a0a0" stroke-width="1.600"/><path d="M5.500 2 V14 M10.500 2 V14" stroke="#a0a0a0" stroke-width="1.800"/><path d="M3.500 13 L12.500 3" stroke="#a0a0a0" stroke-width="1.600" shape-rendering="auto"/></svg>
<svg style="left:383px;top:92px" width="16" height="16" viewBox="0 0 16 16" shape-rendering="crispEdges"><path d="M1.500 2 V8 H5 M11 8 H14.500 V2" stroke="#a0a0a0" stroke-width="1.600" fill="none"/><path d="M5.500 3 V13 M10.500 3 V13" stroke="#a0a0a0" stroke-width="1.800"/></svg>
<svg style="left:406px;top:92px" width="16" height="16" viewBox="0 0 16 16" shape-rendering="crispEdges"><path d="M1.500 2 V8 H5 M11 8 H14.500 V2" stroke="#a0a0a0" stroke-width="1.600" fill="none"/><path d="M5.500 3 V13 M10.500 3 V13" stroke="#a0a0a0" stroke-width="1.800"/><path d="M4 12 L12 4" stroke="#a0a0a0" stroke-width="1.500" shape-rendering="auto"/></svg>
<svg style="left:429px;top:92px" width="16" height="16" viewBox="0 0 16 16" shape-rendering="crispEdges"><path d="M8 2 V14" stroke="#a0a0a0" stroke-width="2"/></svg>
<svg style="left:452px;top:92px" width="16" height="16" viewBox="0 0 16 16" shape-rendering="crispEdges"><path d="M1 8 H15" stroke="#a0a0a0" stroke-width="2"/></svg>
<svg style="left:475px;top:92px" width="16" height="16" viewBox="0 0 16 16" shape-rendering="crispEdges"><path d="M0 8 H3 M13 8 H16" stroke="#a0a0a0" stroke-width="1.600"/><circle cx="8" cy="8" r="4.500" fill="none" stroke="#a0a0a0" stroke-width="1.600" shape-rendering="auto"/></svg>
<svg style="left:498px;top:92px" width="16" height="16" viewBox="0 0 16 16" shape-rendering="crispEdges"><path d="M0 8 H3 M13 8 H16" stroke="#a0a0a0" stroke-width="1.600"/><circle cx="8" cy="8" r="4.500" fill="none" stroke="#a0a0a0" stroke-width="1.600" shape-rendering="auto"/><path d="M3.500 13.500 L12.500 2.500" stroke="#a0a0a0" stroke-width="1.500" shape-rendering="auto"/></svg>
<svg style="left:521px;top:92px" width="16" height="16" viewBox="0 0 16 16" shape-rendering="crispEdges"><rect x="4" y="3" width="8" height="11" fill="none" stroke="#a0a0a0" stroke-width="1.600"/><path d="M1 4 H15 M4 8.500 H12" stroke="#a0a0a0" stroke-width="1.600"/></svg>
<svg style="left:544px;top:92px" width="16" height="16" viewBox="0 0 16 16" shape-rendering="crispEdges"><rect x="4" y="2.500" width="8" height="12" fill="none" stroke="#a0a0a0" stroke-width="1.600"/><path d="M1 5 H15 M1 9 H15 M4 12 H12" stroke="#a0a0a0" stroke-width="1.500"/></svg>
<svg style="left:567px;top:92px" width="16" height="16" viewBox="0 0 16 16" shape-rendering="crispEdges"><path d="M1 4 H7 M7 9 H1 M3 5 L7 9 L3 13 Z" stroke="#a0a0a0" fill="#a0a0a0"/><path d="M14 3 H8.500 V14 H14 M8.500 8.500 H13" stroke="#a0a0a0" stroke-width="1.600" fill="none"/></svg>
<svg style="left:591px;top:92px" width="16" height="16" viewBox="0 0 16 16" shape-rendering="crispEdges"><path d="M3 1 V11 H14" stroke="#a0a0a0" stroke-width="1.800" fill="none"/></svg>
<svg style="left:614px;top:92px" width="16" height="16" viewBox="0 0 16 16" shape-rendering="crispEdges"><path d="M3 1 V9 H8 M8 9 H15 M5 4 L13 14 M13 4 L5 14" stroke="#a0a0a0" stroke-width="1.700" fill="none" shape-rendering="auto"/></svg>
<div style="left:966px;top:85px;width:1px;height:30px;background:#a0a0a0;"></div>
<div style="left:643px;top:114px;width:324px;height:1px;background:#a0a0a0;"></div>
<div style="left:643px;top:115px;width:325px;height:1px;background:#fff;"></div>
<div style="left:643px;top:85px;width:1px;height:29px;background:#fff;"></div>
<div style="left:644px;top:87px;width:1px;height:25px;background:#fff;"></div>
<div style="left:646px;top:87px;width:1px;height:26px;background:#a0a0a0;"></div>
<div style="left:644px;top:112px;width:3px;height:1px;background:#a0a0a0;"></div>
<div style="left:648px;top:87px;width:1px;height:25px;background:#fff;"></div>
<div style="left:650px;top:87px;width:1px;height:26px;background:#a0a0a0;"></div>
<div style="left:648px;top:112px;width:3px;height:1px;background:#a0a0a0;"></div>
<div style="left:652px;top:89px;width:23px;height:22px;background:#fafafa;border:1px solid;border-color:#a0a0a0 #fff #fff #a0a0a0;"></div>
<svg style="left:656px;top:93px" width="16" height="16" viewBox="0 0 16 16" shape-rendering="crispEdges"><path d="M2.500 1.500 H13.500 V9.500 H2.500 Z" fill="#f0f0f0" stroke="#a0a0a0" stroke-width="1.600"/><path d="M8 3 H13 V7 L10 8 L8 6 Z" fill="#a0a0a0"/><path d="M1.200 14.2 Q0.200 12 2 11.3 M14.800 14.2 Q15.800 12 14 11.3" stroke="#a0a0a0" stroke-width="1" fill="none" shape-rendering="auto"/><rect x="2.500" y="10.7" width="4.500" height="3.800" rx="1.700" fill="#fff" stroke="#a0a0a0" stroke-width="1" shape-rendering="auto"/><rect x="9" y="10.7" width="4.500" height="3.800" rx="1.700" fill="#fff" stroke="#a0a0a0" stroke-width="1" shape-rendering="auto"/><path d="M7 12 Q8 11.2 9 12" stroke="#a0a0a0" stroke-width="1" fill="none" shape-rendering="auto"/></svg>
<div style="left:679px;top:89px;width:1px;height:22px;background:#a0a0a0;"></div>
<div style="left:680px;top:89px;width:1px;height:22px;background:#fff;"></div>
<svg style="left:686px;top:92px" width="16" height="16" viewBox="0 0 16 16" shape-rendering="crispEdges"><path d="M1 9 L8 5 L15 9 L8 13 Z M1 11.500 L8 15.500 L15 11.500" fill="#f0f0f0" stroke="#a0a0a0" stroke-width="1.200" shape-rendering="auto"/><path d="M8 1 V7 M5.500 5 L8 7.500 L10.500 5" stroke="#a0a0a0" stroke-width="1.600" fill="none" shape-rendering="auto"/></svg>
<svg style="left:709px;top:92px" width="16" height="16" viewBox="0 0 16 16" shape-rendering="crispEdges"><rect x="1.500" y="4.500" width="13" height="10" fill="#f0f0f0" stroke="#a0a0a0"/><path d="M2 8.500 H14 M2 11.500 H14" stroke="#a0a0a0" stroke-dasharray="1 1"/><path d="M4.500 1 V6 M8 1 V6 M11.500 1 V6" stroke="#a0a0a0"/><path d="M3 5 L4.500 7 L6 5 M6.500 5 L8 7 L9.500 5 M10 5 L11.500 7 L13 5" stroke="#a0a0a0" fill="none"/></svg>
<div style="left:733px;top:89px;width:1px;height:22px;background:#a0a0a0;"></div>
<div style="left:734px;top:89px;width:1px;height:22px;background:#fff;"></div>
<svg style="left:740px;top:92px" width="16" height="16" viewBox="0 0 16 16" shape-rendering="crispEdges"><path d="M1 8 V5 Q1 2 4 2 Q7 2 7 5 V8 Z" fill="#a0a0a0"/><rect x="6.500" y="6.500" width="8" height="8" fill="#f0f0f0" stroke="#a0a0a0" stroke-width="1.300"/><path d="M8.500 9 H12.500 L8.500 12.500 H12.500" stroke="#a0a0a0" fill="none" shape-rendering="auto"/></svg>
<svg style="left:763px;top:92px" width="16" height="16" viewBox="0 0 16 16" shape-rendering="crispEdges"><path d="M1 8 V5 Q1 2 4 2 Q7 2 7 5 V8 Z" fill="#a0a0a0"/><rect x="6.500" y="6.500" width="8" height="8" fill="#f0f0f0" stroke="#a0a0a0" stroke-width="1.300"/><path d="M8.500 8.500 L12.500 12.500 M12.500 8.500 L8.500 12.500" stroke="#a0a0a0" fill="none" shape-rendering="auto"/></svg>
<svg style="left:786px;top:92px" width="16" height="16" viewBox="0 0 16 16" shape-rendering="crispEdges"><path d="M1 7 V5 Q1 2 4 2 Q7 2 7 5 V7 Z" fill="#a0a0a0"/><path d="M3.500 8 V14 M1.500 12 L3.500 14 L5.500 12" stroke="#a0a0a0" fill="none"/><rect x="6.500" y="6.500" width="8" height="8" fill="#f0f0f0" stroke="#a0a0a0" stroke-width="1.300"/><path d="M8.500 11 L10 13 L12.500 8.500" stroke="#a0a0a0" fill="none" shape-rendering="auto"/></svg>
<svg style="left:809px;top:92px" width="16" height="16" viewBox="0 0 16 16" shape-rendering="crispEdges"><path d="M1 7 V5 Q1 2 4 2 Q7 2 7 5 V7 Z" fill="#a0a0a0"/><path d="M1 11.500 H6 M4 9.500 L6 11.500 L4 13.500" stroke="#a0a0a0" fill="none"/><rect x="7.500" y="6.500" width="7" height="8" fill="#f0f0f0" stroke="#a0a0a0" stroke-width="1.300"/><rect x="9" y="11" width="2" height="2" fill="#a0a0a0"/></svg>
<div style="left:833px;top:89px;width:1px;height:22px;background:#a0a0a0;"></div>
<div style="left:834px;top:89px;width:1px;height:22px;background:#fff;"></div>
<svg style="left:840px;top:92px" width="16" height="16" viewBox="0 0 16 16" shape-rendering="crispEdges"><rect x="2" y="1" width="5" height="14" fill="#a0a0a0"/><rect x="3" y="3" width="1" height="2" fill="#f0f0f0"/><rect x="3" y="7" width="1" height="2" fill="#f0f0f0"/><rect x="3" y="11" width="1" height="2" fill="#f0f0f0"/><rect x="9" y="2" width="5" height="3" fill="#a0a0a0"/><rect x="9" y="7" width="5" height="3" fill="#a0a0a0"/><rect x="9" y="12" width="5" height="3" fill="#a0a0a0"/></svg>
<div style="left:864px;top:89px;width:1px;height:22px;background:#a0a0a0;"></div>
<div style="left:865px;top:89px;width:1px;height:22px;background:#fff;"></div>
<svg style="left:871px;top:92px" width="16" height="16" viewBox="0 0 16 16" shape-rendering="crispEdges"><rect x="1" y="1" width="13" height="9" fill="#a0a0a0"/><path d="M1.200 14.2 Q0.200 12 2 11.3 M14.800 14.2 Q15.800 12 14 11.3" stroke="#a0a0a0" stroke-width="1" fill="none" shape-rendering="auto"/><rect x="2.500" y="10.7" width="4.500" height="3.800" rx="1.700" fill="#fff" stroke="#a0a0a0" stroke-width="1" shape-rendering="auto"/><rect x="9" y="10.7" width="4.500" height="3.800" rx="1.700" fill="#fff" stroke="#a0a0a0" stroke-width="1" shape-rendering="auto"/><path d="M7 12 Q8 11.2 9 12" stroke="#a0a0a0" stroke-width="1" fill="none" shape-rendering="auto"/></svg>
<svg style="left:894px;top:92px" width="16" height="16" viewBox="0 0 16 16" shape-rendering="crispEdges"><path d="M1 1 H13 V3 H4 V14 H1 Z" fill="#a0a0a0"/><rect x="5.500" y="4.500" width="9" height="10" fill="#f0f0f0" stroke="#a0a0a0" stroke-width="1.300"/><path d="M8 7 H12 L8 12 H12" stroke="#a0a0a0" fill="none" shape-rendering="auto"/></svg>
<svg style="left:917px;top:92px" width="16" height="16" viewBox="0 0 16 16" shape-rendering="crispEdges"><path d="M1 1 H13 V3 H4 V14 H1 Z" fill="#a0a0a0"/><rect x="5.500" y="4.500" width="9" height="10" fill="#f0f0f0" stroke="#a0a0a0" stroke-width="1.300"/><path d="M7.500 7 L12.500 12 M12.500 7 L7.500 12" stroke="#a0a0a0" fill="none" shape-rendering="auto"/></svg>
<svg style="left:940px;top:92px" width="16" height="16" viewBox="0 0 16 16" shape-rendering="crispEdges"><path d="M1 1 H13 V3 H4 V14 H1 Z" fill="#a0a0a0"/><rect x="5.500" y="4.500" width="9" height="10" fill="#f0f0f0" stroke="#a0a0a0" stroke-width="1.300"/><path d="M7.500 10 L9.500 12.500 L12.500 6.500" stroke="#a0a0a0" fill="none" shape-rendering="auto"/></svg>
<div style="left:432px;top:115px;width:1px;height:30px;background:#a0a0a0;"></div>
<div style="left:2px;top:144px;width:431px;height:1px;background:#a0a0a0;"></div>
<div style="left:2px;top:145px;width:432px;height:1px;background:#fff;"></div>
<div style="left:3px;top:117px;width:1px;height:25px;background:#fff;"></div>
<div style="left:5px;top:117px;width:1px;height:26px;background:#a0a0a0;"></div>
<div style="left:3px;top:142px;width:3px;height:1px;background:#a0a0a0;"></div>
<div style="left:7px;top:117px;width:1px;height:25px;background:#fff;"></div>
<div style="left:9px;top:117px;width:1px;height:26px;background:#a0a0a0;"></div>
<div style="left:7px;top:142px;width:3px;height:1px;background:#a0a0a0;"></div>
<div style="left:11px;top:119px;width:23px;height:22px;background:#fafafa;border:1px solid;border-color:#a0a0a0 #fff #fff #a0a0a0;"></div>
<svg style="left:15px;top:123px" width="16" height="16" viewBox="0 0 16 16" shape-rendering="crispEdges"><rect x="1.5" y="2.5" width="12" height="11" fill="#fff" stroke="#000"/><rect x="1" y="2" width="13" height="3" fill="#00008b"/><rect x="2" y="3" width="1" height="1" fill="#fff"/><path d="M4.500 5 V13" stroke="#000"/><path d="M6.500 14.500 V9.500 L8 8 H10 L11 9.500 H15.500 V14.500 Z" fill="#ff6" stroke="#000"/><path d="M8 11 H14 M8 13 H14" stroke="#fff" stroke-dasharray="1 1"/></svg>
<svg style="left:37px;top:122px" width="16" height="16" viewBox="0 0 16 16" shape-rendering="crispEdges"><rect x="1.5" y="1.5" width="13" height="11" fill="#fff" stroke="#000"/><rect x="1" y="1" width="14" height="3" fill="#00008b"/><path d="M1.500 15 L8.500 7.500" stroke="#000" stroke-width="2.600" shape-rendering="auto"/><path d="M1.500 15 L8.500 7.500" stroke="#a00000" stroke-width="1.200" shape-rendering="auto"/><path d="M5 5 L8 3.500 L11 4.500 L13.500 8 L11.500 9.500 L10.500 8 L8.500 9 L7.500 6.500 Z" fill="#808000" stroke="#000" stroke-width=".8" shape-rendering="auto"/></svg>
<div style="left:57px;top:119px;width:23px;height:22px;background:#fafafa;border:1px solid;border-color:#a0a0a0 #fff #fff #a0a0a0;"></div>
<svg style="left:61px;top:123px" width="16" height="16" viewBox="0 0 16 16" shape-rendering="crispEdges"><rect x="2.5" y="1.5" width="12" height="10" fill="#fff" stroke="#000"/><rect x="2" y="1" width="13" height="3" fill="#00008b"/><path d="M5 7 L7 8 L10 5 L12 6" stroke="#888" fill="none" shape-rendering="auto"/><path d="M1.200 15.2 Q0.200 13 2 12.3 M14.800 15.2 Q15.800 13 14 12.3" stroke="#000" stroke-width="1" fill="none" shape-rendering="auto"/><rect x="2.500" y="11.7" width="4.500" height="3.800" rx="1.700" fill="#fff" stroke="#000" stroke-width="1" shape-rendering="auto"/><rect x="9" y="11.7" width="4.500" height="3.800" rx="1.700" fill="#fff" stroke="#000" stroke-width="1" shape-rendering="auto"/><rect x="3.300" y="12.5" width="1.800" height="2.200" fill="#0ff" shape-rendering="auto"/><rect x="9.800" y="12.5" width="1.800" height="2.200" fill="#0ff" shape-rendering="auto"/><path d="M7 13 Q8 12.2 9 13" stroke="#000" stroke-width="1" fill="none" shape-rendering="auto"/></svg>
<svg style="left:83px;top:122px" width="16" height="16" viewBox="0 0 16 16" shape-rendering="crispEdges"><rect x="2.5" y="1.5" width="11" height="9" fill="#fff" stroke="#000"/><rect x="2" y="1" width="12" height="3" fill="#00008b"/><path d="M6 6 L8 5 L10 7" stroke="#00a" fill="none" shape-rendering="auto"/><rect x="1.500" y="9.500" width="5" height="5" fill="#fff" stroke="#000" stroke-width="1.400"/><rect x="9.500" y="9.500" width="5" height="5" fill="#fff" stroke="#000" stroke-width="1.400"/></svg>
<svg style="left:106px;top:122px" width="16" height="16" viewBox="0 0 16 16" shape-rendering="crispEdges"><rect x="4.5" y="1.5" width="10" height="9" fill="#fff" stroke="#000"/><rect x="4" y="1" width="11" height="3" fill="#00008b"/><rect x="1.500" y="8.500" width="4" height="6" rx="1" fill="#fff" stroke="#000" stroke-width="1.400"/><path d="M5 11.500 H8" stroke="#000"/></svg>
<svg style="left:129px;top:122px" width="16" height="16" viewBox="0 0 16 16" shape-rendering="crispEdges"><rect x="1.500" y="5.500" width="11" height="9" fill="#fff" stroke="#000" stroke-width="1.400"/><path d="M3 8.500 H11 M3 11.500 H11" stroke="#000"/><path d="M4 4 H10" stroke="#000" stroke-width="1.400"/><path d="M8 8 L12 2 L13.500 3.500 Z" fill="#fff" stroke="#000" shape-rendering="auto"/><path d="M12 1 L15.500 1 V6 Z" fill="#00a"/></svg>
<div style="left:153px;top:119px;width:1px;height:22px;background:#a0a0a0;"></div>
<div style="left:154px;top:119px;width:1px;height:22px;background:#fff;"></div>
<svg style="left:160px;top:122px" width="16" height="16" viewBox="0 0 16 16" shape-rendering="crispEdges"><path d="M2 2 L6 5 M10 2 L6 5 M7 2 L10 2" stroke="#a0a0a0" fill="none" stroke-dasharray="2 1" shape-rendering="auto"/><path d="M1.500 14.500 V8.500 L4 6.500 L6.500 8.500 V14.500 Z M8.500 14.500 V8.500 L11 6.500 L13.500 8.500 V14.500 Z" fill="#f0f0f0" stroke="#a0a0a0" stroke-width="1.200"/></svg>
<svg style="left:183px;top:122px" width="16" height="16" viewBox="0 0 16 16" shape-rendering="crispEdges"><rect x="2.500" y="1.500" width="11" height="4" rx="2" fill="#a0a0a0"/><path d="M3 3.500 H13" stroke="#f0f0f0" stroke-dasharray="1 1"/><path d="M13 7 Q15 9 12 10.500 H3 V13" stroke="#a0a0a0" fill="none" stroke-width="1.300"/><path d="M2 14 H5 M7 14 H10 M12 14 H15 M3.500 12 V14 M8.500 12 V14 M13.500 12 V14" stroke="#a0a0a0" stroke-width="1.300"/></svg>
<svg style="left:206px;top:122px" width="16" height="16" viewBox="0 0 16 16" shape-rendering="crispEdges"><path d="M1.500 1.500 H14.500 V10.500 H11.500 V12.500 H9.500 V14.500 H1.500 Z" fill="#f0f0f0" stroke="#a0a0a0" stroke-width="1.300"/><path d="M4.500 1.500 V14 M7.500 3 V8 M11.500 3 V8 M7.500 5.500 H11.500" stroke="#a0a0a0"/></svg>
<svg style="left:229px;top:122px" width="16" height="16" viewBox="0 0 16 16" shape-rendering="crispEdges"><rect x="1.500" y="1.500" width="13" height="13" fill="#f0f0f0" stroke="#a0a0a0" stroke-width="1.300"/><path d="M2 4.500 H14" stroke="#a0a0a0"/><rect x="4.500" y="6.500" width="7" height="3" fill="none" stroke="#a0a0a0"/><path d="M4 12.500 H12" stroke="#a0a0a0" stroke-dasharray="2 1"/></svg>
<svg style="left:252px;top:122px" width="16" height="16" viewBox="0 0 16 16" shape-rendering="crispEdges"><rect x="1.500" y="1.500" width="13" height="13" fill="#f0f0f0" stroke="#a0a0a0" stroke-width="1.300"/><path d="M2 4.500 H14" stroke="#a0a0a0"/><text x="8" y="9.500" font-family="Liberation Mono,monospace" font-size="5" text-anchor="middle" fill="#a0a0a0" font-weight="bold">001</text><text x="8" y="13.700" font-family="Liberation Mono,monospace" font-size="5" text-anchor="middle" fill="#a0a0a0" font-weight="bold">002</text></svg>
<div style="left:276px;top:119px;width:1px;height:22px;background:#a0a0a0;"></div>
<div style="left:277px;top:119px;width:1px;height:22px;background:#fff;"></div>
<svg style="left:283px;top:122px" width="16" height="16" viewBox="0 0 16 16" shape-rendering="crispEdges"><text x="8" y="8.500" font-family="Liberation Sans,sans-serif" font-size="11" font-weight="bold" text-anchor="middle" fill="#000" textLength="14" lengthAdjust="spacingAndGlyphs">10</text><path d="M1.200 14.2 Q0.200 12 2 11.3 M14.800 14.2 Q15.800 12 14 11.3" stroke="#000" stroke-width="1" fill="none" shape-rendering="auto"/><rect x="2.500" y="10.7" width="4.500" height="3.800" rx="1.700" fill="#fff" stroke="#000" stroke-width="1" shape-rendering="auto"/><rect x="9" y="10.7" width="4.500" height="3.800" rx="1.700" fill="#fff" stroke="#000" stroke-width="1" shape-rendering="auto"/><rect x="3.300" y="11.5" width="1.800" height="2.200" fill="#9ff" shape-rendering="auto"/><rect x="9.800" y="11.5" width="1.800" height="2.200" fill="#9ff" shape-rendering="auto"/><path d="M7 12 Q8 11.2 9 12" stroke="#000" stroke-width="1" fill="none" shape-rendering="auto"/></svg>
<div style="left:303px;top:119px;width:23px;height:22px;background:#fafafa;border:1px solid;border-color:#a0a0a0 #fff #fff #a0a0a0;"></div>
<svg style="left:307px;top:123px" width="16" height="16" viewBox="0 0 16 16" shape-rendering="crispEdges"><text x="8" y="8.500" font-family="Liberation Sans,sans-serif" font-size="11" font-weight="bold" text-anchor="middle" fill="#000" textLength="14" lengthAdjust="spacingAndGlyphs">10</text><path d="M1 9 H15 M4.500 6 V12" stroke="#ee0" stroke-width="1.600"/><path d="M1.200 14.2 Q0.200 12 2 11.3 M14.800 14.2 Q15.800 12 14 11.3" stroke="#000" stroke-width="1" fill="none" shape-rendering="auto"/><rect x="2.500" y="10.7" width="4.500" height="3.800" rx="1.700" fill="#fff" stroke="#000" stroke-width="1" shape-rendering="auto"/><rect x="9" y="10.7" width="4.500" height="3.800" rx="1.700" fill="#fff" stroke="#000" stroke-width="1" shape-rendering="auto"/><rect x="3.300" y="11.5" width="1.800" height="2.200" fill="#9ff" shape-rendering="auto"/><rect x="9.800" y="11.5" width="1.800" height="2.200" fill="#9ff" shape-rendering="auto"/><path d="M7 12 Q8 11.2 9 12" stroke="#000" stroke-width="1" fill="none" shape-rendering="auto"/></svg>
<svg style="left:329px;top:122px" width="16" height="16" viewBox="0 0 16 16" shape-rendering="crispEdges"><text x="8" y="8.500" font-family="Liberation Sans,sans-serif" font-size="11" font-weight="bold" text-anchor="middle" fill="#000" textLength="14" lengthAdjust="spacingAndGlyphs">16</text><path d="M1.200 14.2 Q0.200 12 2 11.3 M14.800 14.2 Q15.800 12 14 11.3" stroke="#000" stroke-width="1" fill="none" shape-rendering="auto"/><rect x="2.500" y="10.7" width="4.500" height="3.800" rx="1.700" fill="#fff" stroke="#000" stroke-width="1" shape-rendering="auto"/><rect x="9" y="10.7" width="4.500" height="3.800" rx="1.700" fill="#fff" stroke="#000" stroke-width="1" shape-rendering="auto"/><rect x="3.300" y="11.5" width="1.800" height="2.200" fill="#9ff" shape-rendering="auto"/><rect x="9.800" y="11.5" width="1.800" height="2.200" fill="#9ff" shape-rendering="auto"/><path d="M7 12 Q8 11.2 9 12" stroke="#000" stroke-width="1" fill="none" shape-rendering="auto"/></svg>
<div style="left:353px;top:119px;width:1px;height:22px;background:#a0a0a0;"></div>
<div style="left:354px;top:119px;width:1px;height:22px;background:#fff;"></div>
<svg style="left:360px;top:122px" width="16" height="16" viewBox="0 0 16 16" shape-rendering="crispEdges"><path d="M7 1 L13 7 H11 V14 H4 V10 H2 Z" fill="#a0a0a0"/><path d="M12 9 H14 M12 11 H15" stroke="#a0a0a0"/></svg>
<svg style="left:383px;top:122px" width="16" height="16" viewBox="0 0 16 16" shape-rendering="crispEdges"><path d="M3 1 H9 V5 H14 L12 8 V14 H6 L3 8 Z" fill="#a0a0a0"/><path d="M1 10 H4" stroke="#a0a0a0"/></svg>
<svg style="left:406px;top:122px" width="16" height="16" viewBox="0 0 16 16" shape-rendering="crispEdges"><path d="M3 1 H12 V4 H14 V8 H11 V10 H5 V6 H3 Z" fill="#a0a0a0"/><path d="M1 3 H4 M1 5 H3 M1 7 H4" stroke="#f0f0f0"/><path d="M1.200 14.2 Q0.200 12 2 11.3 M14.800 14.2 Q15.800 12 14 11.3" stroke="#a0a0a0" stroke-width="1" fill="none" shape-rendering="auto"/><rect x="2.500" y="10.7" width="4.500" height="3.800" rx="1.700" fill="#fff" stroke="#a0a0a0" stroke-width="1" shape-rendering="auto"/><rect x="9" y="10.7" width="4.500" height="3.800" rx="1.700" fill="#fff" stroke="#a0a0a0" stroke-width="1" shape-rendering="auto"/><path d="M7 12 Q8 11.2 9 12" stroke="#a0a0a0" stroke-width="1" fill="none" shape-rendering="auto"/></svg>
<div style="left:766px;top:115px;width:1px;height:30px;background:#a0a0a0;"></div>
<div style="left:435px;top:144px;width:332px;height:1px;background:#a0a0a0;"></div>
<div style="left:435px;top:145px;width:333px;height:1px;background:#fff;"></div>
<div style="left:435px;top:115px;width:1px;height:29px;background:#fff;"></div>
<div style="left:436px;top:117px;width:1px;height:25px;background:#fff;"></div>
<div style="left:438px;top:117px;width:1px;height:26px;background:#a0a0a0;"></div>
<div style="left:436px;top:142px;width:3px;height:1px;background:#a0a0a0;"></div>
<div style="left:440px;top:117px;width:1px;height:25px;background:#fff;"></div>
<div style="left:442px;top:117px;width:1px;height:26px;background:#a0a0a0;"></div>
<div style="left:440px;top:142px;width:3px;height:1px;background:#a0a0a0;"></div>
<svg style="left:448px;top:122px" width="16" height="16" viewBox="0 0 16 16" shape-rendering="crispEdges"><rect x="1.500" y="1.500" width="13" height="12" rx="2.500" fill="#a0a0a0"/><rect x="4" y="3" width="8" height="3" fill="#f0f0f0"/><rect x="3" y="9" width="9" height="3" rx="1" fill="#f0f0f0"/><rect x="4" y="10" width="2" height="1" fill="#a0a0a0"/></svg>
<svg style="left:471px;top:122px" width="16" height="16" viewBox="0 0 16 16" shape-rendering="crispEdges"><path d="M3 1.500 H15 V5 H13 V11 Q13 14.500 9 14.500 H1 V11 H3 Z" fill="#a0a0a0"/><rect x="6" y="6" width="5" height="3" fill="#f0f0f0" stroke="#a0a0a0"/><path d="M4 12 H11" stroke="#f0f0f0"/></svg>
<div style="left:495px;top:119px;width:1px;height:22px;background:#a0a0a0;"></div>
<div style="left:496px;top:119px;width:1px;height:22px;background:#fff;"></div>
<svg style="left:502px;top:122px" width="16" height="16" viewBox="0 0 16 16" shape-rendering="crispEdges"><path d="M1 2.500 H11 M1 5.500 H9 M1 8.500 H9 M1 11.500 H7" stroke="#a0a0a0" stroke-width="1.600"/><rect x="7.500" y="4.500" width="7" height="8" fill="#f0f0f0" stroke="#a0a0a0" stroke-width="1.200"/><circle cx="12" cy="12" r="2.500" fill="#a0a0a0" shape-rendering="auto"/><path d="M11 11 L13 13 M13 11 L11 13" stroke="#f0f0f0" stroke-width=".8" shape-rendering="auto"/></svg>
<div style="left:526px;top:119px;width:1px;height:22px;background:#a0a0a0;"></div>
<div style="left:527px;top:119px;width:1px;height:22px;background:#fff;"></div>
<svg style="left:533px;top:122px" width="16" height="16" viewBox="0 0 16 16" shape-rendering="crispEdges"><path d="M4 14 L2 9 L3 8 L5 10 V3 H6.500 V8 V2 H8 V8 V2.500 H9.500 V8 V4 H11 V11 L10 14 Z" fill="#f0f0f0" stroke="#a0a0a0" stroke-width="1.100" shape-rendering="auto"/><rect x="12" y="10" width="3" height="4" fill="#a0a0a0"/></svg>
<svg style="left:556px;top:122px" width="16" height="16" viewBox="0 0 16 16" shape-rendering="crispEdges"><path d="M4 14 L2 9 L3 8 L5 10 V3 H6.500 V8 V2 H8 V8 V2.500 H9.500 V8 V4 H11 V11 L10 14 Z" fill="#a0a0a0" stroke="#a0a0a0" stroke-width="1.100" shape-rendering="auto"/><path d="M5 6 L10 11 M10 6 L5 11" stroke="#f0f0f0" shape-rendering="auto"/><rect x="12" y="10" width="3" height="4" fill="#a0a0a0"/></svg>
<svg style="left:579px;top:122px" width="16" height="16" viewBox="0 0 16 16" shape-rendering="crispEdges"><path d="M3 1.500 L15 8 L3 14.500 Z" fill="#a0a0a0" shape-rendering="auto"/></svg>
<svg style="left:602px;top:122px" width="16" height="16" viewBox="0 0 16 16" shape-rendering="crispEdges"><rect x="2.500" y="2.500" width="11" height="11" fill="#a0a0a0"/></svg>
<svg style="left:625px;top:122px" width="16" height="16" viewBox="0 0 16 16" shape-rendering="crispEdges"><rect x="3" y="2.500" width="4" height="11" fill="#a0a0a0"/><rect x="9" y="2.500" width="4" height="11" fill="#a0a0a0"/></svg>
<svg style="left:648px;top:122px" width="16" height="16" viewBox="0 0 16 16" shape-rendering="crispEdges"><path d="M1 1.500 L11 8 L1 14.500 Z" fill="#a0a0a0" shape-rendering="auto"/><rect x="11" y="1.500" width="3" height="13" fill="#a0a0a0"/></svg>
<svg style="left:671px;top:122px" width="16" height="16" viewBox="0 0 16 16" shape-rendering="crispEdges"><path d="M1 2 L5 5 L1 8 Z" fill="#a0a0a0"/><rect x="6" y="1" width="2" height="9" fill="#a0a0a0"/><path d="M8 9 H12 V3 M10 5 L12 2.500 L14 5 M3 12 H15 M9 10 V14" stroke="#a0a0a0" stroke-width="1.600" fill="none"/></svg>
<svg style="left:694px;top:122px" width="16" height="16" viewBox="0 0 16 16" shape-rendering="crispEdges"><path d="M1 9 H7 V4 M1 6 H5" stroke="#a0a0a0" stroke-width="1.600" fill="none"/><rect x="3" y="8" width="8" height="6" fill="#a0a0a0"/><path d="M12 1 V13 M9 3 L12 1 L15 3" stroke="#a0a0a0" stroke-width="1.600" fill="none"/><path d="M13 8 L15 6" stroke="#a0a0a0"/></svg>
<svg style="left:717px;top:122px" width="16" height="16" viewBox="0 0 16 16" shape-rendering="crispEdges"><path d="M1 1.500 L8 8 L1 14.500 Z M8 1.500 L15 8 L8 14.500 Z" fill="#a0a0a0" shape-rendering="auto"/></svg>
<svg style="left:740px;top:122px" width="16" height="16" viewBox="0 0 16 16" shape-rendering="crispEdges"><path d="M1 3 L10 8 L1 13" stroke="#a0a0a0" stroke-width="2.400" fill="none" shape-rendering="auto"/><path d="M1 8 H10" stroke="#a0a0a0" stroke-width="2"/><rect x="12" y="1.500" width="3" height="13" fill="#a0a0a0"/></svg>
<div style="left:1023px;top:115px;width:1px;height:30px;background:#a0a0a0;"></div>
<div style="left:769px;top:144px;width:255px;height:1px;background:#a0a0a0;"></div>
<div style="left:769px;top:145px;width:256px;height:1px;background:#fff;"></div>
<div style="left:769px;top:115px;width:1px;height:29px;background:#fff;"></div>
<div style="left:770px;top:117px;width:1px;height:25px;background:#fff;"></div>
<div style="left:772px;top:117px;width:1px;height:26px;background:#a0a0a0;"></div>
<div style="left:770px;top:142px;width:3px;height:1px;background:#a0a0a0;"></div>
<div style="left:774px;top:117px;width:1px;height:25px;background:#fff;"></div>
<div style="left:776px;top:117px;width:1px;height:26px;background:#a0a0a0;"></div>
<div style="left:774px;top:142px;width:3px;height:1px;background:#a0a0a0;"></div>
<svg style="left:783px;top:122px" width="16" height="16" viewBox="0 0 16 16" shape-rendering="crispEdges"><rect x="2" y="5" width="12" height="6" fill="#a0a0a0"/><rect x="3" y="6" width="1" height="1" fill="#f0f0f0"/><rect x="3" y="8" width="1" height="1" fill="#f0f0f0"/><rect x="5" y="6" width="1" height="1" fill="#f0f0f0"/><rect x="5" y="8" width="1" height="1" fill="#f0f0f0"/><rect x="7" y="6" width="1" height="1" fill="#f0f0f0"/><rect x="7" y="8" width="1" height="1" fill="#f0f0f0"/><rect x="9" y="6" width="1" height="1" fill="#f0f0f0"/><rect x="9" y="8" width="1" height="1" fill="#f0f0f0"/><rect x="11" y="6" width="1" height="1" fill="#f0f0f0"/><rect x="11" y="8" width="1" height="1" fill="#f0f0f0"/><path d="M8 11 V13" stroke="#a0a0a0"/></svg>
<svg style="left:806px;top:122px" width="16" height="16" viewBox="0 0 16 16" shape-rendering="crispEdges"><rect x="1" y="4" width="14" height="7" fill="#a0a0a0"/><rect x="2" y="5" width="1" height="1" fill="#f0f0f0"/><rect x="2" y="7" width="1" height="1" fill="#f0f0f0"/><rect x="2" y="9" width="1" height="1" fill="#f0f0f0"/><rect x="4" y="5" width="1" height="1" fill="#f0f0f0"/><rect x="4" y="7" width="1" height="1" fill="#f0f0f0"/><rect x="4" y="9" width="1" height="1" fill="#f0f0f0"/><rect x="6" y="5" width="1" height="1" fill="#f0f0f0"/><rect x="6" y="7" width="1" height="1" fill="#f0f0f0"/><rect x="6" y="9" width="1" height="1" fill="#f0f0f0"/><rect x="8" y="5" width="1" height="1" fill="#f0f0f0"/><rect x="8" y="7" width="1" height="1" fill="#f0f0f0"/><rect x="8" y="9" width="1" height="1" fill="#f0f0f0"/><rect x="10" y="5" width="1" height="1" fill="#f0f0f0"/><rect x="10" y="7" width="1" height="1" fill="#f0f0f0"/><rect x="10" y="9" width="1" height="1" fill="#f0f0f0"/><rect x="12" y="5" width="1" height="1" fill="#f0f0f0"/><rect x="12" y="7" width="1" height="1" fill="#f0f0f0"/><rect x="12" y="9" width="1" height="1" fill="#f0f0f0"/><path d="M8 11 V13" stroke="#a0a0a0"/></svg>
<svg style="left:829px;top:122px" width="16" height="16" viewBox="0 0 16 16" shape-rendering="crispEdges"><rect x="3" y="5" width="11" height="7" fill="#a0a0a0"/><rect x="4" y="6" width="1" height="1" fill="#f0f0f0"/><rect x="4" y="8" width="1" height="1" fill="#f0f0f0"/><rect x="4" y="10" width="1" height="1" fill="#f0f0f0"/><rect x="6" y="6" width="1" height="1" fill="#f0f0f0"/><rect x="6" y="8" width="1" height="1" fill="#f0f0f0"/><rect x="6" y="10" width="1" height="1" fill="#f0f0f0"/><rect x="8" y="6" width="1" height="1" fill="#f0f0f0"/><rect x="8" y="8" width="1" height="1" fill="#f0f0f0"/><rect x="8" y="10" width="1" height="1" fill="#f0f0f0"/><rect x="10" y="6" width="1" height="1" fill="#f0f0f0"/><rect x="10" y="8" width="1" height="1" fill="#f0f0f0"/><rect x="10" y="10" width="1" height="1" fill="#f0f0f0"/><rect x="12" y="6" width="1" height="1" fill="#f0f0f0"/><rect x="12" y="8" width="1" height="1" fill="#f0f0f0"/><rect x="12" y="10" width="1" height="1" fill="#f0f0f0"/><path d="M6 3 H11 L8.500 5 Z" fill="#a0a0a0"/><path d="M8.500 12 V14" stroke="#a0a0a0"/></svg>
<svg style="left:851px;top:122px" width="16" height="16" viewBox="0 0 16 16" shape-rendering="crispEdges"><rect x="3" y="4" width="11" height="7" fill="#a0a0a0"/><rect x="4" y="5" width="1" height="1" fill="#f0f0f0"/><rect x="4" y="7" width="1" height="1" fill="#f0f0f0"/><rect x="4" y="9" width="1" height="1" fill="#f0f0f0"/><rect x="6" y="5" width="1" height="1" fill="#f0f0f0"/><rect x="6" y="7" width="1" height="1" fill="#f0f0f0"/><rect x="6" y="9" width="1" height="1" fill="#f0f0f0"/><rect x="8" y="5" width="1" height="1" fill="#f0f0f0"/><rect x="8" y="7" width="1" height="1" fill="#f0f0f0"/><rect x="8" y="9" width="1" height="1" fill="#f0f0f0"/><rect x="10" y="5" width="1" height="1" fill="#f0f0f0"/><rect x="10" y="7" width="1" height="1" fill="#f0f0f0"/><rect x="10" y="9" width="1" height="1" fill="#f0f0f0"/><rect x="12" y="5" width="1" height="1" fill="#f0f0f0"/><rect x="12" y="7" width="1" height="1" fill="#f0f0f0"/><rect x="12" y="9" width="1" height="1" fill="#f0f0f0"/><path d="M8.500 2 V4 M8.500 11 V13 M5 13.500 H12" stroke="#a0a0a0"/></svg>
<svg style="left:874px;top:122px" width="16" height="16" viewBox="0 0 16 16" shape-rendering="crispEdges"><path d="M2 2.500 H14" stroke="#a0a0a0" stroke-dasharray="1 1" stroke-width="2"/><path d="M2 4.500 H14 M8 4 V13 M4 9.500 H12" stroke="#a0a0a0" stroke-width="1.300"/></svg>
<svg style="left:897px;top:122px" width="16" height="16" viewBox="0 0 16 16" shape-rendering="crispEdges"><path d="M3 2.500 H13" stroke="#a0a0a0" stroke-dasharray="1 1" stroke-width="2"/><path d="M3 4.500 H13 M8 4 V8 M1 8.500 H15 M4 8 V14 M12 8 V14 M2 12.500 H6 M10 12.500 H14" stroke="#a0a0a0" stroke-width="1.300"/></svg>
<svg style="left:920px;top:122px" width="16" height="16" viewBox="0 0 16 16" shape-rendering="crispEdges"><path d="M4 1 V8 M12 1 V8 M2 4.500 H6 M10 4.500 H14 M1 8.500 H15 M8 8 V11" stroke="#a0a0a0" stroke-width="1.300"/><path d="M3 12.500 H13" stroke="#a0a0a0" stroke-dasharray="1 1" stroke-width="2"/></svg>
<svg style="left:943px;top:122px" width="16" height="16" viewBox="0 0 16 16" shape-rendering="crispEdges"><path d="M8 2 V8 M5 5.500 H11 M1 8.500 H15 M4 8 V12 M12 8 V12" stroke="#a0a0a0" stroke-width="1.300"/><path d="M1 13.500 H7 M9 13.500 H15" stroke="#a0a0a0" stroke-dasharray="1 1" stroke-width="2"/></svg>
<svg style="left:966px;top:122px" width="16" height="16" viewBox="0 0 16 16" shape-rendering="crispEdges"><path d="M1 2.500 H7 M9 2.500 H15" stroke="#a0a0a0" stroke-dasharray="1 1" stroke-width="2"/><path d="M4 3 V7 M12 3 V7 M1 7.500 H15 M8 7 V14 M5 11.500 H11" stroke="#a0a0a0" stroke-width="1.300"/></svg>
<div style="left:990px;top:119px;width:1px;height:22px;background:#a0a0a0;"></div>
<div style="left:991px;top:119px;width:1px;height:22px;background:#fff;"></div>
<svg style="left:997px;top:122px" width="16" height="16" viewBox="0 0 16 16" shape-rendering="crispEdges"><path d="M3 2 V7 H13 V13" stroke="#a0a0a0" stroke-width="1.300" fill="none"/></svg>
<div style="left:217px;top:145px;width:1px;height:30px;background:#a0a0a0;"></div>
<div style="left:2px;top:174px;width:216px;height:1px;background:#a0a0a0;"></div>
<div style="left:2px;top:175px;width:217px;height:1px;background:#fff;"></div>
<div style="left:3px;top:147px;width:1px;height:25px;background:#fff;"></div>
<div style="left:5px;top:147px;width:1px;height:26px;background:#a0a0a0;"></div>
<div style="left:3px;top:172px;width:3px;height:1px;background:#a0a0a0;"></div>
<div style="left:7px;top:147px;width:1px;height:25px;background:#fff;"></div>
<div style="left:9px;top:147px;width:1px;height:26px;background:#a0a0a0;"></div>
<div style="left:7px;top:172px;width:3px;height:1px;background:#a0a0a0;"></div>
<svg style="left:14px;top:152px" width="16" height="16" viewBox="0 0 16 16" shape-rendering="crispEdges"><path d="M5 2.500 H14 M7 5.500 H12 M5 8.500 H14 M7 11.500 H12 M8 14 V1" stroke="#a0a0a0" stroke-width="1.200" stroke-dasharray="none"/><path d="M1 7 H6 M3 5 L1 7 L3 9" stroke="#a0a0a0" fill="none" stroke-width="1.300"/></svg>
<svg style="left:37px;top:152px" width="16" height="16" viewBox="0 0 16 16" shape-rendering="crispEdges"><path d="M5 2.500 H14 M7 5.500 H12 M5 8.500 H14 M7 11.500 H12 M8 14 V1" stroke="#a0a0a0" stroke-width="1.200"/><path d="M1 7 H6 M4 5 L6 7 L4 9" stroke="#a0a0a0" fill="none" stroke-width="1.300"/></svg>
<div style="left:61px;top:149px;width:1px;height:22px;background:#a0a0a0;"></div>
<div style="left:62px;top:149px;width:1px;height:22px;background:#fff;"></div>
<svg style="left:67px;top:152px" width="16" height="16" viewBox="0 0 16 16" shape-rendering="crispEdges"><path d="M2 2.500 H13 M4 5.500 H13 M4 8.500 H13 M4 11.500 H13 M4 14.500 H13" stroke="#a0a0a0" stroke-width="1.200"/></svg>
<svg style="left:90px;top:152px" width="16" height="16" viewBox="0 0 16 16" shape-rendering="crispEdges"><path d="M4 3 Q8 0 11 3 M3 1 V4 H6" stroke="#a0a0a0" fill="none" shape-rendering="auto"/><path d="M2 6.500 H12 M4 9.500 H13 M4 12.500 H13 M4 15 H13" stroke="#a0a0a0" stroke-width="1.200"/></svg>
<div style="left:115px;top:149px;width:1px;height:22px;background:#a0a0a0;"></div>
<div style="left:116px;top:149px;width:1px;height:22px;background:#fff;"></div>
<svg style="left:122px;top:152px" width="16" height="16" viewBox="0 0 16 16" shape-rendering="crispEdges"><path d="M1 14 L9 4" stroke="#a0a0a0" stroke-width="1.300" shape-rendering="auto"/><path d="M8 4 L13 8 L9 13 L5 9 Z" fill="#a0a0a0" shape-rendering="auto"/></svg>
<svg style="left:145px;top:152px" width="16" height="16" viewBox="0 0 16 16" shape-rendering="crispEdges"><path d="M1 14 L9 5" stroke="#a0a0a0" stroke-width="1.300" shape-rendering="auto"/><path d="M9 6 L14 9 L11 14 L6 10 Z" fill="#a0a0a0" shape-rendering="auto"/><path d="M3 4 Q5 0 9 3 M2 1 V5 H5" stroke="#a0a0a0" fill="none" shape-rendering="auto"/></svg>
<svg style="left:168px;top:152px" width="16" height="16" viewBox="0 0 16 16" shape-rendering="crispEdges"><path d="M1 14 L9 5" stroke="#a0a0a0" stroke-width="1.300" shape-rendering="auto"/><path d="M9 6 L14 9 L11 14 L6 10 Z" fill="#a0a0a0" shape-rendering="auto"/><path d="M3 4 Q6 0 9 4 M10 1 V5 H7" stroke="#a0a0a0" fill="none" shape-rendering="auto"/></svg>
<svg style="left:190px;top:152px" width="16" height="16" viewBox="0 0 16 16" shape-rendering="crispEdges"><path d="M1 14 L9 5" stroke="#a0a0a0" stroke-width="1.300" shape-rendering="auto"/><path d="M9 6 L14 9 L11 14 L6 10 Z" fill="#a0a0a0" shape-rendering="auto"/><path d="M3 1 L11 8 M9 1 L3 7" stroke="#a0a0a0" stroke-width="1.400" shape-rendering="auto"/></svg>
<div style="left:0px;top:174px;width:1920px;height:1px;background:#a0a0a0;"></div>
<div style="left:0px;top:175px;width:306px;height:1px;background:#fff;"></div>
<div style="left:5px;top:180px;width:264px;height:1px;background:#fff;"></div>
<div style="left:5px;top:182px;width:264px;height:1px;background:#a0a0a0;"></div>
<div style="left:268px;top:180px;width:1px;height:3px;background:#a0a0a0;"></div>
<div style="left:5px;top:185px;width:264px;height:1px;background:#fff;"></div>
<div style="left:5px;top:187px;width:264px;height:1px;background:#a0a0a0;"></div>
<div style="left:268px;top:185px;width:1px;height:3px;background:#a0a0a0;"></div>
<div style="left:270px;top:177px;width:12px;height:12px;background:#f0f0f0;border:1px solid;border-color:#fff #696969 #696969 #fff;"></div>
<svg style="left:272px;top:181px" width="7" height="4" viewBox="0 0 7 4" shape-rendering="crispEdges"><path d="M0 0 H7 L3.500 4 Z" fill="#a0a0a0"/></svg>
<div style="left:284px;top:178px;width:11px;height:11px;background:#f0f0f0;border:1px solid;border-color:#fff #696969 #696969 #fff;"></div>
<svg style="left:286px;top:180px" width="7" height="7" viewBox="0 0 7 7"><path d="M0.500 0.500 L6.500 6.500 M6.500 0.500 L0.500 6.500" stroke="#000" stroke-width="1.700"/></svg>
<div style="left:3px;top:191px;width:294px;height:607px;background:#cce8cf;border:2px solid;border-color:#828282 #fff #cce8cf #828282;border-bottom-width:0;"></div>
<div style="left:4px;top:192px;width:292px;height:1px;background:#696969;"></div>
<div style="left:4px;top:192px;width:1px;height:606px;background:#696969;"></div>
<div style="left:54px;top:797px;width:242px;height:1px;background:#000;"></div>
<div style="left:297px;top:176px;width:9px;height:644px;background:#f0f0f0;"></div>
<div style="left:302px;top:176px;width:2px;height:644px;background:#fff;"></div>
<div style="left:3px;top:798px;width:294px;height:21px;background:#f0f0f0;"></div>
<svg style="left:3px;top:797px" width="60" height="22" viewBox="0 0 60 22">
<path d="M2 0 L8 20 H45 L51 0" fill="#cce8cf" stroke="none"/>
<path d="M2 0 L8.500 20.500 H45 L51.500 0.500" fill="none" stroke="#000" stroke-width="1.200"/></svg>
<div class="t ui" style="left:16px;top:800px;font-size:15px;line-height:16px;">工程</div>
<div style="left:0px;top:819px;width:306px;height:1px;background:#a0a0a0;"></div>
<div style="left:35px;top:215px;width:1px;height:8px;background:repeating-linear-gradient(180deg,#808080 0 1px,transparent 1px 2px);"></div>
<div style="left:57px;top:237px;width:1px;height:409px;background:repeating-linear-gradient(180deg,#808080 0 1px,transparent 1px 2px);"></div>
<div style="left:79px;top:391px;width:1px;height:8px;background:repeating-linear-gradient(180deg,#808080 0 1px,transparent 1px 2px);"></div>
<div style="left:101px;top:413px;width:1px;height:211px;background:repeating-linear-gradient(180deg,#808080 0 1px,transparent 1px 2px);"></div>
<div style="left:18px;top:205px;width:8px;height:1px;background:repeating-linear-gradient(90deg,#808080 0 1px,transparent 1px 2px);"></div>
<div style="left:9px;top:201px;width:9px;height:9px;background:#cce8cf;border:1px solid #808080;"></div>
<div style="left:11px;top:205px;width:5px;height:1px;background:#000;"></div>
<svg style="left:27px;top:197px" width="16" height="16" viewBox="0 0 16 16" shape-rendering="crispEdges"><rect x="5" y="0.500" width="5" height="3" fill="#fff" stroke="#000" stroke-width="1.400"/><path d="M7.500 4 V6 M3.500 6.500 H12.500 M3.500 6 V8 M12.500 6 V8 M7.500 6 V8" stroke="#000"/><rect x="1" y="6.500" width="4" height="3" rx="1" fill="#fff" stroke="#000" stroke-width="1.400"/><rect x="10" y="6.500" width="4" height="3" rx="1" fill="#fff" stroke="#000" stroke-width="1.400"/><rect x="3.500" y="11.500" width="4" height="3" rx="1" fill="#fff" stroke="#000" stroke-width="1.400"/><rect x="9.500" y="11.500" width="4" height="3" rx="1" fill="#fff" stroke="#000" stroke-width="1.400"/><path d="M5.500 9.500 V11 M11.500 9.500 V11" stroke="#000"/></svg>
<div class="t ui" style="left:48px;top:196px;height:18px;font-size:15px;line-height:18px;">新工程</div>
<div style="left:40px;top:227px;width:8px;height:1px;background:repeating-linear-gradient(90deg,#808080 0 1px,transparent 1px 2px);"></div>
<div style="left:31px;top:223px;width:9px;height:9px;background:#cce8cf;border:1px solid #808080;"></div>
<div style="left:33px;top:227px;width:5px;height:1px;background:#000;"></div>
<svg style="left:49px;top:219px" width="16" height="16" viewBox="0 0 16 16" shape-rendering="crispEdges"><path d="M1 4 L3 2 H16 V11 L14 13 H1 Z" fill="#000"/><rect x="2" y="9" width="3" height="2" fill="#0c0"/><rect x="4" y="6" width="1" height="2" fill="#f00"/><rect x="6" y="6" width="1" height="2" fill="#f00"/><path d="M6 10.500 H13" stroke="#aaa"/><path d="M3 4.500 H14" stroke="#666"/></svg>
<div class="t ui" style="left:70px;top:218px;height:18px;font-size:15px;line-height:18px;">新PLC1[CP1H] 监视模式</div>
<div style="left:58px;top:249px;width:11px;height:1px;background:repeating-linear-gradient(90deg,#808080 0 1px,transparent 1px 2px);"></div>
<svg style="left:71px;top:241px" width="16" height="16" viewBox="0 0 16 16" shape-rendering="crispEdges"><rect x="1.500" y="1.500" width="11" height="5" rx="2" fill="#ee0" stroke="#000"/><path d="M3 3.500 H11" stroke="#fff" stroke-dasharray="1 1"/><circle cx="12" cy="4" r="1" fill="#000"/><path d="M13 6 Q15 8 13 10 H3 V12" stroke="#000" fill="none" shape-rendering="auto"/><path d="M3 12.500 H14" stroke="#000"/><circle cx="3" cy="14" r="1.300" fill="#fff" stroke="#888" stroke-width=".8" shape-rendering="auto"/><circle cx="8" cy="14" r="1.300" fill="#fff" stroke="#888" stroke-width=".8" shape-rendering="auto"/><circle cx="13" cy="14" r="1.300" fill="#fff" stroke="#888" stroke-width=".8" shape-rendering="auto"/></svg>
<div class="t ui" style="left:92px;top:240px;height:18px;font-size:15px;line-height:18px;">符号</div>
<div style="left:58px;top:271px;width:11px;height:1px;background:repeating-linear-gradient(90deg,#808080 0 1px,transparent 1px 2px);"></div>
<svg style="left:71px;top:263px" width="16" height="16" viewBox="0 0 16 16" shape-rendering="crispEdges"><rect x="0" y="1" width="14" height="14" fill="#0ee"/><path d="M1.500 3.500 Q1.500 2 3.500 2 Q5.500 2 5.500 3.500 V10 Q5.500 12 4 12.500 V14 H3 V12.500 Q1.500 12 1.500 10 Z" fill="#000"/><rect x="3" y="4" width="1" height="6" fill="#fff"/><rect x="7" y="1" width="7" height="3" fill="#000"/><rect x="9.500" y="3.500" width="3" height="10" fill="#ee0" stroke="#000"/></svg>
<div class="t ui" style="left:92px;top:262px;height:18px;font-size:15px;line-height:18px;">IO表和单元设置</div>
<div style="left:58px;top:293px;width:11px;height:1px;background:repeating-linear-gradient(90deg,#808080 0 1px,transparent 1px 2px);"></div>
<svg style="left:71px;top:285px" width="16" height="16" viewBox="0 0 16 16" shape-rendering="crispEdges"><rect x="2.500" y="1.500" width="11" height="13" rx="1" fill="#fff" stroke="#000" stroke-width="1.300"/><path d="M4 1 V3 M6 1 V3 M8 1 V3 M10 1 V3 M12 1 V3" stroke="#000"/><path d="M4 5.500 H12" stroke="#aaa"/><circle cx="9" cy="10" r="2.500" fill="#ee0" stroke="#000" shape-rendering="auto"/><rect x="8.500" y="9.500" width="1" height="1" fill="#000"/></svg>
<div class="t ui" style="left:92px;top:284px;height:18px;font-size:15px;line-height:18px;">设置</div>
<div style="left:58px;top:315px;width:11px;height:1px;background:repeating-linear-gradient(90deg,#808080 0 1px,transparent 1px 2px);"></div>
<svg style="left:71px;top:307px" width="16" height="16" viewBox="0 0 16 16" shape-rendering="crispEdges"><path d="M1.500 1.500 H8.500 L11.500 4.500 V13.500 H1.500 Z" fill="#fff" stroke="#000"/><path d="M3 5 H8 M3 7 H7 M3 9 H6" stroke="#000"/><circle cx="11" cy="11" r="4.300" fill="#e00" stroke="#800" stroke-width=".6" shape-rendering="auto"/><path d="M9 9 L13 13 M13 9 L9 13" stroke="#fff" stroke-width="1.600" shape-rendering="auto"/></svg>
<div class="t ui" style="left:92px;top:306px;height:18px;font-size:15px;line-height:18px;">错误日志</div>
<div style="left:58px;top:337px;width:11px;height:1px;background:repeating-linear-gradient(90deg,#808080 0 1px,transparent 1px 2px);"></div>
<svg style="left:71px;top:329px" width="16" height="16" viewBox="0 0 16 16" shape-rendering="crispEdges"><path d="M2 15 L3 2 Q8 -1 13 2 L14 15 Z" fill="#ccc" stroke="#000" stroke-width="1.200" shape-rendering="auto"/><circle cx="8" cy="8" r="4.500" fill="#fff" stroke="#000" stroke-width="1.200" shape-rendering="auto"/><path d="M8 5 V8 H10.500" stroke="#000" fill="none"/><rect x="1" y="14" width="14" height="2" fill="#000"/></svg>
<div class="t ui" style="left:92px;top:328px;height:18px;font-size:15px;line-height:18px;">PLC 时钟</div>
<div style="left:58px;top:359px;width:11px;height:1px;background:repeating-linear-gradient(90deg,#808080 0 1px,transparent 1px 2px);"></div>
<svg style="left:71px;top:351px" width="16" height="16" viewBox="0 0 16 16" shape-rendering="crispEdges"><path d="M1 9 L11 3 L16 6 L6 12 Z" fill="#999" shape-rendering="auto"/><path d="M2 10.500 L3 13 M4 11.500 L5 14 M6 12.500 L7 15 M8 11.500 L9 14 M10 10.500 L11 13 M12 9.500 L13 12 M14 8.500 L15 11" stroke="#222" shape-rendering="auto"/><path d="M1 9 L11 3 L16 6" stroke="#ccc" fill="none" shape-rendering="auto"/></svg>
<div class="t ui" style="left:92px;top:350px;height:18px;font-size:15px;line-height:18px;">内存</div>
<div style="left:62px;top:381px;width:8px;height:1px;background:repeating-linear-gradient(90deg,#808080 0 1px,transparent 1px 2px);"></div>
<div style="left:53px;top:377px;width:9px;height:9px;background:#cce8cf;border:1px solid #808080;"></div>
<div style="left:55px;top:381px;width:5px;height:1px;background:#000;"></div>
<svg style="left:71px;top:373px" width="16" height="16" viewBox="0 0 16 16" shape-rendering="crispEdges"><path d="M1 1 H6 L15 12 V15 H10 L1 4 Z" fill="#dd0" stroke="#000" stroke-width="1" shape-rendering="auto"/><path d="M3 1 L6 5 M1 3 L5 7 M6 3 L3 6 M8 6 L5 9 M7 8 L11 12 M10 8 L7 11 M12 10 L9 13 M10 11 L13 15 M14 12 L11 15" stroke="#000" stroke-width="1.100" shape-rendering="auto"/></svg>
<div class="t ui" style="left:92px;top:372px;height:18px;font-size:15px;line-height:18px;">程序</div>
<div style="left:84px;top:403px;width:8px;height:1px;background:repeating-linear-gradient(90deg,#808080 0 1px,transparent 1px 2px);"></div>
<div style="left:75px;top:399px;width:9px;height:9px;background:#cce8cf;border:1px solid #808080;"></div>
<div style="left:77px;top:403px;width:5px;height:1px;background:#000;"></div>
<svg style="left:93px;top:395px" width="16" height="16" viewBox="0 0 16 16" shape-rendering="crispEdges"><path d="M3 2 Q8 -1 13 2 Q16 5 13 8 L14 11 L11 9 Q6 11 3 8 Q0 5 3 2 Z" fill="#fff" stroke="#000" stroke-width="1.200" shape-rendering="auto"/><path d="M5 5 L7 6 L9 4 L11 6" stroke="#000" fill="none" shape-rendering="auto"/><path d="M4 9 L8 11 L10 15 L14 16 L12 12 L9 10" fill="#cc0" stroke="#000" shape-rendering="auto"/><path d="M5 11 L4 15 L7 14" fill="#cc0" stroke="#000" shape-rendering="auto"/></svg>
<div class="t ui" style="left:114px;top:394px;height:18px;font-size:15px;line-height:18px;">新程序1 (00)运行中</div>
<div style="left:102px;top:425px;width:11px;height:1px;background:repeating-linear-gradient(90deg,#808080 0 1px,transparent 1px 2px);"></div>
<svg style="left:115px;top:417px" width="16" height="16" viewBox="0 0 16 16" shape-rendering="crispEdges"><rect x="1.500" y="1.500" width="11" height="5" rx="2" fill="#ee0" stroke="#000"/><path d="M3 3.500 H11" stroke="#fff" stroke-dasharray="1 1"/><circle cx="12" cy="4" r="1" fill="#000"/><path d="M13 6 Q15 8 13 10 H3 V12" stroke="#000" fill="none" shape-rendering="auto"/><path d="M3 12.500 H14" stroke="#000"/><circle cx="3" cy="14" r="1.300" fill="#fff" stroke="#888" stroke-width=".8" shape-rendering="auto"/><circle cx="8" cy="14" r="1.300" fill="#fff" stroke="#888" stroke-width=".8" shape-rendering="auto"/><circle cx="13" cy="14" r="1.300" fill="#fff" stroke="#888" stroke-width=".8" shape-rendering="auto"/></svg>
<div class="t ui" style="left:136px;top:416px;height:18px;font-size:15px;line-height:18px;">符号</div>
<div style="left:102px;top:447px;width:11px;height:1px;background:repeating-linear-gradient(90deg,#808080 0 1px,transparent 1px 2px);"></div>
<svg style="left:115px;top:439px" width="16" height="16" viewBox="0 0 16 16" shape-rendering="crispEdges"><path d="M1.500 3.500 Q1.500 1.500 8 1.500 Q14.500 1.500 14.500 3.500 V8 L11 12 H10 V14.500 H6 V12 H5 L1.500 8 Z" fill="#e8e800" stroke="#000" stroke-width="1.500" shape-rendering="auto"/><path d="M2 4 Q8 7 14 4" stroke="#000" fill="none" shape-rendering="auto"/><path d="M5 3 H11" stroke="#880"/><rect x="4" y="6.500" width="3" height="4" fill="#fff"/><path d="M8.500 6.500 V11 M10.500 6.500 V10 M7 8 H12 M7 10 H11" stroke="#000" stroke-width=".9"/></svg>
<div class="t ui" style="left:136px;top:438px;height:18px;font-size:15px;line-height:18px;">数据传送</div>
<div style="left:102px;top:469px;width:11px;height:1px;background:repeating-linear-gradient(90deg,#808080 0 1px,transparent 1px 2px);"></div>
<svg style="left:115px;top:461px" width="16" height="16" viewBox="0 0 16 16" shape-rendering="crispEdges"><path d="M1.500 3.500 Q1.500 1.500 8 1.500 Q14.500 1.500 14.500 3.500 V8 L11 12 H10 V14.500 H6 V12 H5 L1.500 8 Z" fill="#e8e800" stroke="#000" stroke-width="1.500" shape-rendering="auto"/><path d="M2 4 Q8 7 14 4" stroke="#000" fill="none" shape-rendering="auto"/><path d="M5 3 H11" stroke="#880"/><rect x="4" y="6.500" width="3" height="4" fill="#fff"/><path d="M8.500 6.500 V11 M10.500 6.500 V10 M7 8 H12 M7 10 H11" stroke="#000" stroke-width=".9"/></svg>
<div class="t ui" style="left:136px;top:460px;height:18px;font-size:15px;line-height:18px;">通用</div>
<div style="left:134px;top:479px;width:64px;height:22px;background:#f0f0f0;"></div>
<div style="left:102px;top:491px;width:11px;height:1px;background:repeating-linear-gradient(90deg,#808080 0 1px,transparent 1px 2px);"></div>
<svg style="left:115px;top:483px" width="16" height="16" viewBox="0 0 16 16" shape-rendering="crispEdges"><path d="M1.500 3.500 Q1.500 1.500 8 1.500 Q14.500 1.500 14.500 3.500 V8 L11 12 H10 V14.500 H6 V12 H5 L1.500 8 Z" fill="#e8e800" stroke="#000" stroke-width="1.500" shape-rendering="auto"/><path d="M2 4 Q8 7 14 4" stroke="#000" fill="none" shape-rendering="auto"/><path d="M5 3 H11" stroke="#880"/><rect x="4" y="6.500" width="3" height="4" fill="#fff"/><path d="M8.500 6.500 V11 M10.500 6.500 V10 M7 8 H12 M7 10 H11" stroke="#000" stroke-width=".9"/></svg>
<div class="t ui" style="left:136px;top:482px;height:18px;font-size:15px;line-height:18px;">运行控制</div>
<div style="left:102px;top:513px;width:11px;height:1px;background:repeating-linear-gradient(90deg,#808080 0 1px,transparent 1px 2px);"></div>
<svg style="left:115px;top:505px" width="16" height="16" viewBox="0 0 16 16" shape-rendering="crispEdges"><path d="M1.500 3.500 Q1.500 1.500 8 1.500 Q14.500 1.500 14.500 3.500 V8 L11 12 H10 V14.500 H6 V12 H5 L1.500 8 Z" fill="#e8e800" stroke="#000" stroke-width="1.500" shape-rendering="auto"/><path d="M2 4 Q8 7 14 4" stroke="#000" fill="none" shape-rendering="auto"/><path d="M5 3 H11" stroke="#880"/><rect x="4" y="6.500" width="3" height="4" fill="#fff"/><path d="M8.500 6.500 V11 M10.500 6.500 V10 M7 8 H12 M7 10 H11" stroke="#000" stroke-width=".9"/></svg>
<div class="t ui" style="left:136px;top:504px;height:18px;font-size:15px;line-height:18px;">夹具运行许可</div>
<div style="left:102px;top:535px;width:11px;height:1px;background:repeating-linear-gradient(90deg,#808080 0 1px,transparent 1px 2px);"></div>
<svg style="left:115px;top:527px" width="16" height="16" viewBox="0 0 16 16" shape-rendering="crispEdges"><path d="M1.500 3.500 Q1.500 1.500 8 1.500 Q14.500 1.500 14.500 3.500 V8 L11 12 H10 V14.500 H6 V12 H5 L1.500 8 Z" fill="#e8e800" stroke="#000" stroke-width="1.500" shape-rendering="auto"/><path d="M2 4 Q8 7 14 4" stroke="#000" fill="none" shape-rendering="auto"/><path d="M5 3 H11" stroke="#880"/><rect x="4" y="6.500" width="3" height="4" fill="#fff"/><path d="M8.500 6.500 V11 M10.500 6.500 V10 M7 8 H12 M7 10 H11" stroke="#000" stroke-width=".9"/></svg>
<div class="t ui" style="left:136px;top:526px;height:18px;font-size:15px;line-height:18px;">横移电机</div>
<div style="left:102px;top:557px;width:11px;height:1px;background:repeating-linear-gradient(90deg,#808080 0 1px,transparent 1px 2px);"></div>
<svg style="left:115px;top:549px" width="16" height="16" viewBox="0 0 16 16" shape-rendering="crispEdges"><path d="M1.500 3.500 Q1.500 1.500 8 1.500 Q14.500 1.500 14.500 3.500 V8 L11 12 H10 V14.500 H6 V12 H5 L1.500 8 Z" fill="#e8e800" stroke="#000" stroke-width="1.500" shape-rendering="auto"/><path d="M2 4 Q8 7 14 4" stroke="#000" fill="none" shape-rendering="auto"/><path d="M5 3 H11" stroke="#880"/><rect x="4" y="6.500" width="3" height="4" fill="#fff"/><path d="M8.500 6.500 V11 M10.500 6.500 V10 M7 8 H12 M7 10 H11" stroke="#000" stroke-width=".9"/></svg>
<div class="t ui" style="left:136px;top:548px;height:18px;font-size:15px;line-height:18px;">上下电机</div>
<div style="left:102px;top:579px;width:11px;height:1px;background:repeating-linear-gradient(90deg,#808080 0 1px,transparent 1px 2px);"></div>
<svg style="left:115px;top:571px" width="16" height="16" viewBox="0 0 16 16" shape-rendering="crispEdges"><path d="M1.500 3.500 Q1.500 1.500 8 1.500 Q14.500 1.500 14.500 3.500 V8 L11 12 H10 V14.500 H6 V12 H5 L1.500 8 Z" fill="#e8e800" stroke="#000" stroke-width="1.500" shape-rendering="auto"/><path d="M2 4 Q8 7 14 4" stroke="#000" fill="none" shape-rendering="auto"/><path d="M5 3 H11" stroke="#880"/><rect x="4" y="6.500" width="3" height="4" fill="#fff"/><path d="M8.500 6.500 V11 M10.500 6.500 V10 M7 8 H12 M7 10 H11" stroke="#000" stroke-width=".9"/></svg>
<div class="t ui" style="left:136px;top:570px;height:18px;font-size:15px;line-height:18px;">偏移电机</div>
<div style="left:102px;top:601px;width:11px;height:1px;background:repeating-linear-gradient(90deg,#808080 0 1px,transparent 1px 2px);"></div>
<svg style="left:115px;top:593px" width="16" height="16" viewBox="0 0 16 16" shape-rendering="crispEdges"><path d="M1.500 3.500 Q1.500 1.500 8 1.500 Q14.500 1.500 14.500 3.500 V8 L11 12 H10 V14.500 H6 V12 H5 L1.500 8 Z" fill="#e8e800" stroke="#000" stroke-width="1.500" shape-rendering="auto"/><path d="M2 4 Q8 7 14 4" stroke="#000" fill="none" shape-rendering="auto"/><path d="M5 3 H11" stroke="#880"/><rect x="4" y="6.500" width="3" height="4" fill="#fff"/><path d="M8.500 6.500 V11 M10.500 6.500 V10 M7 8 H12 M7 10 H11" stroke="#000" stroke-width=".9"/></svg>
<div class="t ui" style="left:136px;top:592px;height:18px;font-size:15px;line-height:18px;">机械手动作</div>
<div style="left:102px;top:623px;width:11px;height:1px;background:repeating-linear-gradient(90deg,#808080 0 1px,transparent 1px 2px);"></div>
<svg style="left:115px;top:615px" width="16" height="16" viewBox="0 0 16 16" shape-rendering="crispEdges"><path d="M1.500 3.500 Q1.500 1.500 8 1.500 Q14.500 1.500 14.500 3.500 V8 L11 12 H10 V14.500 H6 V12 H5 L1.500 8 Z" fill="#e8e800" stroke="#000" stroke-width="1.500" shape-rendering="auto"/><path d="M2 4 Q8 7 14 4" stroke="#000" fill="none" shape-rendering="auto"/><path d="M5 3 H11" stroke="#880"/><rect x="4" y="6.500" width="3" height="4" fill="#fff"/><path d="M8.500 6.500 V11 M10.500 6.500 V10 M7 8 H12 M7 10 H11" stroke="#000" stroke-width=".9"/></svg>
<div class="t ui" style="left:136px;top:614px;height:18px;font-size:15px;line-height:18px;">END</div>
<div style="left:58px;top:645px;width:11px;height:1px;background:repeating-linear-gradient(90deg,#808080 0 1px,transparent 1px 2px);"></div>
<svg style="left:71px;top:637px" width="16" height="16" viewBox="0 0 16 16" shape-rendering="crispEdges"><rect x="4" y="1" width="8" height="14" fill="#aaa" stroke="#000" stroke-width="1.300"/><path d="M1 3.500 H4 M1 6.500 H4 M1 9.500 H4 M1 12.500 H4 M12 3.500 H15 M12 6.500 H15 M12 9.500 H15 M12 12.500 H15" stroke="#000"/></svg>
<div class="t ui" style="left:92px;top:636px;height:18px;font-size:15px;line-height:18px;">功能块</div>
<div style="left:307px;top:175px;width:1611px;height:622px;border:1px solid;border-color:#696969 #fff #fff #696969;background:#f0f0f0;"></div>
<div style="left:306px;top:174px;width:1614px;height:1px;background:#a0a0a0;"></div>
<div style="left:306px;top:174px;width:1px;height:623px;background:#a0a0a0;"></div>
<svg style="left:308px;top:176px;overflow:hidden" width="1589" height="600" viewBox="308 176 1589 600" shape-rendering="crispEdges"><rect x="379" y="176" width="3" height="1" fill="#a8cca8"/><rect x="380" y="175" width="1" height="3" fill="#a8cca8"/><rect x="380" y="176" width="1" height="1" fill="#8fb98f"/><rect x="379" y="255" width="3" height="1" fill="#a8cca8"/><rect x="380" y="254" width="1" height="3" fill="#a8cca8"/><rect x="380" y="255" width="1" height="1" fill="#8fb98f"/><rect x="379" y="334" width="3" height="1" fill="#a8cca8"/><rect x="380" y="333" width="1" height="3" fill="#a8cca8"/><rect x="380" y="334" width="1" height="1" fill="#8fb98f"/><rect x="379" y="413" width="3" height="1" fill="#a8cca8"/><rect x="380" y="412" width="1" height="3" fill="#a8cca8"/><rect x="380" y="413" width="1" height="1" fill="#8fb98f"/><rect x="379" y="492" width="3" height="1" fill="#a8cca8"/><rect x="380" y="491" width="1" height="3" fill="#a8cca8"/><rect x="380" y="492" width="1" height="1" fill="#8fb98f"/><rect x="379" y="571" width="3" height="1" fill="#a8cca8"/><rect x="380" y="570" width="1" height="3" fill="#a8cca8"/><rect x="380" y="571" width="1" height="1" fill="#8fb98f"/><rect x="379" y="650" width="3" height="1" fill="#a8cca8"/><rect x="380" y="649" width="1" height="3" fill="#a8cca8"/><rect x="380" y="650" width="1" height="1" fill="#8fb98f"/><rect x="379" y="729" width="3" height="1" fill="#a8cca8"/><rect x="380" y="728" width="1" height="3" fill="#a8cca8"/><rect x="380" y="729" width="1" height="1" fill="#8fb98f"/><rect x="467" y="176" width="3" height="1" fill="#a8cca8"/><rect x="468" y="175" width="1" height="3" fill="#a8cca8"/><rect x="468" y="176" width="1" height="1" fill="#8fb98f"/><rect x="467" y="255" width="3" height="1" fill="#a8cca8"/><rect x="468" y="254" width="1" height="3" fill="#a8cca8"/><rect x="468" y="255" width="1" height="1" fill="#8fb98f"/><rect x="467" y="334" width="3" height="1" fill="#a8cca8"/><rect x="468" y="333" width="1" height="3" fill="#a8cca8"/><rect x="468" y="334" width="1" height="1" fill="#8fb98f"/><rect x="467" y="413" width="3" height="1" fill="#a8cca8"/><rect x="468" y="412" width="1" height="3" fill="#a8cca8"/><rect x="468" y="413" width="1" height="1" fill="#8fb98f"/><rect x="467" y="492" width="3" height="1" fill="#a8cca8"/><rect x="468" y="491" width="1" height="3" fill="#a8cca8"/><rect x="468" y="492" width="1" height="1" fill="#8fb98f"/><rect x="467" y="571" width="3" height="1" fill="#a8cca8"/><rect x="468" y="570" width="1" height="3" fill="#a8cca8"/><rect x="468" y="571" width="1" height="1" fill="#8fb98f"/><rect x="467" y="650" width="3" height="1" fill="#a8cca8"/><rect x="468" y="649" width="1" height="3" fill="#a8cca8"/><rect x="468" y="650" width="1" height="1" fill="#8fb98f"/><rect x="467" y="729" width="3" height="1" fill="#a8cca8"/><rect x="468" y="728" width="1" height="3" fill="#a8cca8"/><rect x="468" y="729" width="1" height="1" fill="#8fb98f"/><rect x="555" y="176" width="3" height="1" fill="#a8cca8"/><rect x="556" y="175" width="1" height="3" fill="#a8cca8"/><rect x="556" y="176" width="1" height="1" fill="#8fb98f"/><rect x="555" y="255" width="3" height="1" fill="#a8cca8"/><rect x="556" y="254" width="1" height="3" fill="#a8cca8"/><rect x="556" y="255" width="1" height="1" fill="#8fb98f"/><rect x="555" y="334" width="3" height="1" fill="#a8cca8"/><rect x="556" y="333" width="1" height="3" fill="#a8cca8"/><rect x="556" y="334" width="1" height="1" fill="#8fb98f"/><rect x="555" y="413" width="3" height="1" fill="#a8cca8"/><rect x="556" y="412" width="1" height="3" fill="#a8cca8"/><rect x="556" y="413" width="1" height="1" fill="#8fb98f"/><rect x="555" y="492" width="3" height="1" fill="#a8cca8"/><rect x="556" y="491" width="1" height="3" fill="#a8cca8"/><rect x="556" y="492" width="1" height="1" fill="#8fb98f"/><rect x="555" y="571" width="3" height="1" fill="#a8cca8"/><rect x="556" y="570" width="1" height="3" fill="#a8cca8"/><rect x="556" y="571" width="1" height="1" fill="#8fb98f"/><rect x="555" y="650" width="3" height="1" fill="#a8cca8"/><rect x="556" y="649" width="1" height="3" fill="#a8cca8"/><rect x="556" y="650" width="1" height="1" fill="#8fb98f"/><rect x="555" y="729" width="3" height="1" fill="#a8cca8"/><rect x="556" y="728" width="1" height="3" fill="#a8cca8"/><rect x="556" y="729" width="1" height="1" fill="#8fb98f"/><rect x="643" y="176" width="3" height="1" fill="#a8cca8"/><rect x="644" y="175" width="1" height="3" fill="#a8cca8"/><rect x="644" y="176" width="1" height="1" fill="#8fb98f"/><rect x="643" y="255" width="3" height="1" fill="#a8cca8"/><rect x="644" y="254" width="1" height="3" fill="#a8cca8"/><rect x="644" y="255" width="1" height="1" fill="#8fb98f"/><rect x="643" y="334" width="3" height="1" fill="#a8cca8"/><rect x="644" y="333" width="1" height="3" fill="#a8cca8"/><rect x="644" y="334" width="1" height="1" fill="#8fb98f"/><rect x="643" y="413" width="3" height="1" fill="#a8cca8"/><rect x="644" y="412" width="1" height="3" fill="#a8cca8"/><rect x="644" y="413" width="1" height="1" fill="#8fb98f"/><rect x="643" y="492" width="3" height="1" fill="#a8cca8"/><rect x="644" y="491" width="1" height="3" fill="#a8cca8"/><rect x="644" y="492" width="1" height="1" fill="#8fb98f"/><rect x="643" y="571" width="3" height="1" fill="#a8cca8"/><rect x="644" y="570" width="1" height="3" fill="#a8cca8"/><rect x="644" y="571" width="1" height="1" fill="#8fb98f"/><rect x="643" y="650" width="3" height="1" fill="#a8cca8"/><rect x="644" y="649" width="1" height="3" fill="#a8cca8"/><rect x="644" y="650" width="1" height="1" fill="#8fb98f"/><rect x="643" y="729" width="3" height="1" fill="#a8cca8"/><rect x="644" y="728" width="1" height="3" fill="#a8cca8"/><rect x="644" y="729" width="1" height="1" fill="#8fb98f"/><rect x="731" y="176" width="3" height="1" fill="#a8cca8"/><rect x="732" y="175" width="1" height="3" fill="#a8cca8"/><rect x="732" y="176" width="1" height="1" fill="#8fb98f"/><rect x="731" y="255" width="3" height="1" fill="#a8cca8"/><rect x="732" y="254" width="1" height="3" fill="#a8cca8"/><rect x="732" y="255" width="1" height="1" fill="#8fb98f"/><rect x="731" y="334" width="3" height="1" fill="#a8cca8"/><rect x="732" y="333" width="1" height="3" fill="#a8cca8"/><rect x="732" y="334" width="1" height="1" fill="#8fb98f"/><rect x="731" y="413" width="3" height="1" fill="#a8cca8"/><rect x="732" y="412" width="1" height="3" fill="#a8cca8"/><rect x="732" y="413" width="1" height="1" fill="#8fb98f"/><rect x="731" y="492" width="3" height="1" fill="#a8cca8"/><rect x="732" y="491" width="1" height="3" fill="#a8cca8"/><rect x="732" y="492" width="1" height="1" fill="#8fb98f"/><rect x="731" y="571" width="3" height="1" fill="#a8cca8"/><rect x="732" y="570" width="1" height="3" fill="#a8cca8"/><rect x="732" y="571" width="1" height="1" fill="#8fb98f"/><rect x="731" y="650" width="3" height="1" fill="#a8cca8"/><rect x="732" y="649" width="1" height="3" fill="#a8cca8"/><rect x="732" y="650" width="1" height="1" fill="#8fb98f"/><rect x="731" y="729" width="3" height="1" fill="#a8cca8"/><rect x="732" y="728" width="1" height="3" fill="#a8cca8"/><rect x="732" y="729" width="1" height="1" fill="#8fb98f"/><rect x="819" y="176" width="3" height="1" fill="#a8cca8"/><rect x="820" y="175" width="1" height="3" fill="#a8cca8"/><rect x="820" y="176" width="1" height="1" fill="#8fb98f"/><rect x="819" y="255" width="3" height="1" fill="#a8cca8"/><rect x="820" y="254" width="1" height="3" fill="#a8cca8"/><rect x="820" y="255" width="1" height="1" fill="#8fb98f"/><rect x="819" y="334" width="3" height="1" fill="#a8cca8"/><rect x="820" y="333" width="1" height="3" fill="#a8cca8"/><rect x="820" y="334" width="1" height="1" fill="#8fb98f"/><rect x="819" y="413" width="3" height="1" fill="#a8cca8"/><rect x="820" y="412" width="1" height="3" fill="#a8cca8"/><rect x="820" y="413" width="1" height="1" fill="#8fb98f"/><rect x="819" y="492" width="3" height="1" fill="#a8cca8"/><rect x="820" y="491" width="1" height="3" fill="#a8cca8"/><rect x="820" y="492" width="1" height="1" fill="#8fb98f"/><rect x="819" y="571" width="3" height="1" fill="#a8cca8"/><rect x="820" y="570" width="1" height="3" fill="#a8cca8"/><rect x="820" y="571" width="1" height="1" fill="#8fb98f"/><rect x="819" y="650" width="3" height="1" fill="#a8cca8"/><rect x="820" y="649" width="1" height="3" fill="#a8cca8"/><rect x="820" y="650" width="1" height="1" fill="#8fb98f"/><rect x="819" y="729" width="3" height="1" fill="#a8cca8"/><rect x="820" y="728" width="1" height="3" fill="#a8cca8"/><rect x="820" y="729" width="1" height="1" fill="#8fb98f"/><rect x="907" y="176" width="3" height="1" fill="#a8cca8"/><rect x="908" y="175" width="1" height="3" fill="#a8cca8"/><rect x="908" y="176" width="1" height="1" fill="#8fb98f"/><rect x="907" y="255" width="3" height="1" fill="#a8cca8"/><rect x="908" y="254" width="1" height="3" fill="#a8cca8"/><rect x="908" y="255" width="1" height="1" fill="#8fb98f"/><rect x="907" y="334" width="3" height="1" fill="#a8cca8"/><rect x="908" y="333" width="1" height="3" fill="#a8cca8"/><rect x="908" y="334" width="1" height="1" fill="#8fb98f"/><rect x="907" y="413" width="3" height="1" fill="#a8cca8"/><rect x="908" y="412" width="1" height="3" fill="#a8cca8"/><rect x="908" y="413" width="1" height="1" fill="#8fb98f"/><rect x="907" y="492" width="3" height="1" fill="#a8cca8"/><rect x="908" y="491" width="1" height="3" fill="#a8cca8"/><rect x="908" y="492" width="1" height="1" fill="#8fb98f"/><rect x="907" y="571" width="3" height="1" fill="#a8cca8"/><rect x="908" y="570" width="1" height="3" fill="#a8cca8"/><rect x="908" y="571" width="1" height="1" fill="#8fb98f"/><rect x="907" y="650" width="3" height="1" fill="#a8cca8"/><rect x="908" y="649" width="1" height="3" fill="#a8cca8"/><rect x="908" y="650" width="1" height="1" fill="#8fb98f"/><rect x="907" y="729" width="3" height="1" fill="#a8cca8"/><rect x="908" y="728" width="1" height="3" fill="#a8cca8"/><rect x="908" y="729" width="1" height="1" fill="#8fb98f"/><rect x="995" y="176" width="3" height="1" fill="#a8cca8"/><rect x="996" y="175" width="1" height="3" fill="#a8cca8"/><rect x="996" y="176" width="1" height="1" fill="#8fb98f"/><rect x="995" y="255" width="3" height="1" fill="#a8cca8"/><rect x="996" y="254" width="1" height="3" fill="#a8cca8"/><rect x="996" y="255" width="1" height="1" fill="#8fb98f"/><rect x="995" y="334" width="3" height="1" fill="#a8cca8"/><rect x="996" y="333" width="1" height="3" fill="#a8cca8"/><rect x="996" y="334" width="1" height="1" fill="#8fb98f"/><rect x="995" y="413" width="3" height="1" fill="#a8cca8"/><rect x="996" y="412" width="1" height="3" fill="#a8cca8"/><rect x="996" y="413" width="1" height="1" fill="#8fb98f"/><rect x="995" y="492" width="3" height="1" fill="#a8cca8"/><rect x="996" y="491" width="1" height="3" fill="#a8cca8"/><rect x="996" y="492" width="1" height="1" fill="#8fb98f"/><rect x="995" y="571" width="3" height="1" fill="#a8cca8"/><rect x="996" y="570" width="1" height="3" fill="#a8cca8"/><rect x="996" y="571" width="1" height="1" fill="#8fb98f"/><rect x="995" y="650" width="3" height="1" fill="#a8cca8"/><rect x="996" y="649" width="1" height="3" fill="#a8cca8"/><rect x="996" y="650" width="1" height="1" fill="#8fb98f"/><rect x="995" y="729" width="3" height="1" fill="#a8cca8"/><rect x="996" y="728" width="1" height="3" fill="#a8cca8"/><rect x="996" y="729" width="1" height="1" fill="#8fb98f"/><rect x="1083" y="176" width="3" height="1" fill="#a8cca8"/><rect x="1084" y="175" width="1" height="3" fill="#a8cca8"/><rect x="1084" y="176" width="1" height="1" fill="#8fb98f"/><rect x="1083" y="255" width="3" height="1" fill="#a8cca8"/><rect x="1084" y="254" width="1" height="3" fill="#a8cca8"/><rect x="1084" y="255" width="1" height="1" fill="#8fb98f"/><rect x="1083" y="334" width="3" height="1" fill="#a8cca8"/><rect x="1084" y="333" width="1" height="3" fill="#a8cca8"/><rect x="1084" y="334" width="1" height="1" fill="#8fb98f"/><rect x="1083" y="413" width="3" height="1" fill="#a8cca8"/><rect x="1084" y="412" width="1" height="3" fill="#a8cca8"/><rect x="1084" y="413" width="1" height="1" fill="#8fb98f"/><rect x="1083" y="492" width="3" height="1" fill="#a8cca8"/><rect x="1084" y="491" width="1" height="3" fill="#a8cca8"/><rect x="1084" y="492" width="1" height="1" fill="#8fb98f"/><rect x="1083" y="571" width="3" height="1" fill="#a8cca8"/><rect x="1084" y="570" width="1" height="3" fill="#a8cca8"/><rect x="1084" y="571" width="1" height="1" fill="#8fb98f"/><rect x="1083" y="650" width="3" height="1" fill="#a8cca8"/><rect x="1084" y="649" width="1" height="3" fill="#a8cca8"/><rect x="1084" y="650" width="1" height="1" fill="#8fb98f"/><rect x="1083" y="729" width="3" height="1" fill="#a8cca8"/><rect x="1084" y="728" width="1" height="3" fill="#a8cca8"/><rect x="1084" y="729" width="1" height="1" fill="#8fb98f"/><rect x="1171" y="176" width="3" height="1" fill="#a8cca8"/><rect x="1172" y="175" width="1" height="3" fill="#a8cca8"/><rect x="1172" y="176" width="1" height="1" fill="#8fb98f"/><rect x="1171" y="255" width="3" height="1" fill="#a8cca8"/><rect x="1172" y="254" width="1" height="3" fill="#a8cca8"/><rect x="1172" y="255" width="1" height="1" fill="#8fb98f"/><rect x="1171" y="334" width="3" height="1" fill="#a8cca8"/><rect x="1172" y="333" width="1" height="3" fill="#a8cca8"/><rect x="1172" y="334" width="1" height="1" fill="#8fb98f"/><rect x="1171" y="413" width="3" height="1" fill="#a8cca8"/><rect x="1172" y="412" width="1" height="3" fill="#a8cca8"/><rect x="1172" y="413" width="1" height="1" fill="#8fb98f"/><rect x="1171" y="492" width="3" height="1" fill="#a8cca8"/><rect x="1172" y="491" width="1" height="3" fill="#a8cca8"/><rect x="1172" y="492" width="1" height="1" fill="#8fb98f"/><rect x="1171" y="571" width="3" height="1" fill="#a8cca8"/><rect x="1172" y="570" width="1" height="3" fill="#a8cca8"/><rect x="1172" y="571" width="1" height="1" fill="#8fb98f"/><rect x="1171" y="650" width="3" height="1" fill="#a8cca8"/><rect x="1172" y="649" width="1" height="3" fill="#a8cca8"/><rect x="1172" y="650" width="1" height="1" fill="#8fb98f"/><rect x="1171" y="729" width="3" height="1" fill="#a8cca8"/><rect x="1172" y="728" width="1" height="3" fill="#a8cca8"/><rect x="1172" y="729" width="1" height="1" fill="#8fb98f"/><rect x="1259" y="176" width="3" height="1" fill="#a8cca8"/><rect x="1260" y="175" width="1" height="3" fill="#a8cca8"/><rect x="1260" y="176" width="1" height="1" fill="#8fb98f"/><rect x="1259" y="255" width="3" height="1" fill="#a8cca8"/><rect x="1260" y="254" width="1" height="3" fill="#a8cca8"/><rect x="1260" y="255" width="1" height="1" fill="#8fb98f"/><rect x="1259" y="334" width="3" height="1" fill="#a8cca8"/><rect x="1260" y="333" width="1" height="3" fill="#a8cca8"/><rect x="1260" y="334" width="1" height="1" fill="#8fb98f"/><rect x="1259" y="413" width="3" height="1" fill="#a8cca8"/><rect x="1260" y="412" width="1" height="3" fill="#a8cca8"/><rect x="1260" y="413" width="1" height="1" fill="#8fb98f"/><rect x="1259" y="492" width="3" height="1" fill="#a8cca8"/><rect x="1260" y="491" width="1" height="3" fill="#a8cca8"/><rect x="1260" y="492" width="1" height="1" fill="#8fb98f"/><rect x="1259" y="571" width="3" height="1" fill="#a8cca8"/><rect x="1260" y="570" width="1" height="3" fill="#a8cca8"/><rect x="1260" y="571" width="1" height="1" fill="#8fb98f"/><rect x="1259" y="650" width="3" height="1" fill="#a8cca8"/><rect x="1260" y="649" width="1" height="3" fill="#a8cca8"/><rect x="1260" y="650" width="1" height="1" fill="#8fb98f"/><rect x="1259" y="729" width="3" height="1" fill="#a8cca8"/><rect x="1260" y="728" width="1" height="3" fill="#a8cca8"/><rect x="1260" y="729" width="1" height="1" fill="#8fb98f"/><rect x="1347" y="176" width="3" height="1" fill="#a8cca8"/><rect x="1348" y="175" width="1" height="3" fill="#a8cca8"/><rect x="1348" y="176" width="1" height="1" fill="#8fb98f"/><rect x="1347" y="255" width="3" height="1" fill="#a8cca8"/><rect x="1348" y="254" width="1" height="3" fill="#a8cca8"/><rect x="1348" y="255" width="1" height="1" fill="#8fb98f"/><rect x="1347" y="334" width="3" height="1" fill="#a8cca8"/><rect x="1348" y="333" width="1" height="3" fill="#a8cca8"/><rect x="1348" y="334" width="1" height="1" fill="#8fb98f"/><rect x="1347" y="413" width="3" height="1" fill="#a8cca8"/><rect x="1348" y="412" width="1" height="3" fill="#a8cca8"/><rect x="1348" y="413" width="1" height="1" fill="#8fb98f"/><rect x="1347" y="492" width="3" height="1" fill="#a8cca8"/><rect x="1348" y="491" width="1" height="3" fill="#a8cca8"/><rect x="1348" y="492" width="1" height="1" fill="#8fb98f"/><rect x="1347" y="571" width="3" height="1" fill="#a8cca8"/><rect x="1348" y="570" width="1" height="3" fill="#a8cca8"/><rect x="1348" y="571" width="1" height="1" fill="#8fb98f"/><rect x="1347" y="650" width="3" height="1" fill="#a8cca8"/><rect x="1348" y="649" width="1" height="3" fill="#a8cca8"/><rect x="1348" y="650" width="1" height="1" fill="#8fb98f"/><rect x="1347" y="729" width="3" height="1" fill="#a8cca8"/><rect x="1348" y="728" width="1" height="3" fill="#a8cca8"/><rect x="1348" y="729" width="1" height="1" fill="#8fb98f"/><rect x="1435" y="176" width="3" height="1" fill="#a8cca8"/><rect x="1436" y="175" width="1" height="3" fill="#a8cca8"/><rect x="1436" y="176" width="1" height="1" fill="#8fb98f"/><rect x="1435" y="255" width="3" height="1" fill="#a8cca8"/><rect x="1436" y="254" width="1" height="3" fill="#a8cca8"/><rect x="1436" y="255" width="1" height="1" fill="#8fb98f"/><rect x="1435" y="334" width="3" height="1" fill="#a8cca8"/><rect x="1436" y="333" width="1" height="3" fill="#a8cca8"/><rect x="1436" y="334" width="1" height="1" fill="#8fb98f"/><rect x="1435" y="413" width="3" height="1" fill="#a8cca8"/><rect x="1436" y="412" width="1" height="3" fill="#a8cca8"/><rect x="1436" y="413" width="1" height="1" fill="#8fb98f"/><rect x="1435" y="492" width="3" height="1" fill="#a8cca8"/><rect x="1436" y="491" width="1" height="3" fill="#a8cca8"/><rect x="1436" y="492" width="1" height="1" fill="#8fb98f"/><rect x="1435" y="571" width="3" height="1" fill="#a8cca8"/><rect x="1436" y="570" width="1" height="3" fill="#a8cca8"/><rect x="1436" y="571" width="1" height="1" fill="#8fb98f"/><rect x="1435" y="650" width="3" height="1" fill="#a8cca8"/><rect x="1436" y="649" width="1" height="3" fill="#a8cca8"/><rect x="1436" y="650" width="1" height="1" fill="#8fb98f"/><rect x="1435" y="729" width="3" height="1" fill="#a8cca8"/><rect x="1436" y="728" width="1" height="3" fill="#a8cca8"/><rect x="1436" y="729" width="1" height="1" fill="#8fb98f"/><rect x="1523" y="176" width="3" height="1" fill="#a8cca8"/><rect x="1524" y="175" width="1" height="3" fill="#a8cca8"/><rect x="1524" y="176" width="1" height="1" fill="#8fb98f"/><rect x="1523" y="255" width="3" height="1" fill="#a8cca8"/><rect x="1524" y="254" width="1" height="3" fill="#a8cca8"/><rect x="1524" y="255" width="1" height="1" fill="#8fb98f"/><rect x="1523" y="334" width="3" height="1" fill="#a8cca8"/><rect x="1524" y="333" width="1" height="3" fill="#a8cca8"/><rect x="1524" y="334" width="1" height="1" fill="#8fb98f"/><rect x="1523" y="413" width="3" height="1" fill="#a8cca8"/><rect x="1524" y="412" width="1" height="3" fill="#a8cca8"/><rect x="1524" y="413" width="1" height="1" fill="#8fb98f"/><rect x="1523" y="492" width="3" height="1" fill="#a8cca8"/><rect x="1524" y="491" width="1" height="3" fill="#a8cca8"/><rect x="1524" y="492" width="1" height="1" fill="#8fb98f"/><rect x="1523" y="571" width="3" height="1" fill="#a8cca8"/><rect x="1524" y="570" width="1" height="3" fill="#a8cca8"/><rect x="1524" y="571" width="1" height="1" fill="#8fb98f"/><rect x="1523" y="650" width="3" height="1" fill="#a8cca8"/><rect x="1524" y="649" width="1" height="3" fill="#a8cca8"/><rect x="1524" y="650" width="1" height="1" fill="#8fb98f"/><rect x="1523" y="729" width="3" height="1" fill="#a8cca8"/><rect x="1524" y="728" width="1" height="3" fill="#a8cca8"/><rect x="1524" y="729" width="1" height="1" fill="#8fb98f"/><rect x="1611" y="176" width="3" height="1" fill="#a8cca8"/><rect x="1612" y="175" width="1" height="3" fill="#a8cca8"/><rect x="1612" y="176" width="1" height="1" fill="#8fb98f"/><rect x="1611" y="255" width="3" height="1" fill="#a8cca8"/><rect x="1612" y="254" width="1" height="3" fill="#a8cca8"/><rect x="1612" y="255" width="1" height="1" fill="#8fb98f"/><rect x="1611" y="334" width="3" height="1" fill="#a8cca8"/><rect x="1612" y="333" width="1" height="3" fill="#a8cca8"/><rect x="1612" y="334" width="1" height="1" fill="#8fb98f"/><rect x="1611" y="413" width="3" height="1" fill="#a8cca8"/><rect x="1612" y="412" width="1" height="3" fill="#a8cca8"/><rect x="1612" y="413" width="1" height="1" fill="#8fb98f"/><rect x="1611" y="492" width="3" height="1" fill="#a8cca8"/><rect x="1612" y="491" width="1" height="3" fill="#a8cca8"/><rect x="1612" y="492" width="1" height="1" fill="#8fb98f"/><rect x="1611" y="571" width="3" height="1" fill="#a8cca8"/><rect x="1612" y="570" width="1" height="3" fill="#a8cca8"/><rect x="1612" y="571" width="1" height="1" fill="#8fb98f"/><rect x="1611" y="650" width="3" height="1" fill="#a8cca8"/><rect x="1612" y="649" width="1" height="3" fill="#a8cca8"/><rect x="1612" y="650" width="1" height="1" fill="#8fb98f"/><rect x="1611" y="729" width="3" height="1" fill="#a8cca8"/><rect x="1612" y="728" width="1" height="3" fill="#a8cca8"/><rect x="1612" y="729" width="1" height="1" fill="#8fb98f"/><rect x="1699" y="176" width="3" height="1" fill="#a8cca8"/><rect x="1700" y="175" width="1" height="3" fill="#a8cca8"/><rect x="1700" y="176" width="1" height="1" fill="#8fb98f"/><rect x="1699" y="255" width="3" height="1" fill="#a8cca8"/><rect x="1700" y="254" width="1" height="3" fill="#a8cca8"/><rect x="1700" y="255" width="1" height="1" fill="#8fb98f"/><rect x="1699" y="334" width="3" height="1" fill="#a8cca8"/><rect x="1700" y="333" width="1" height="3" fill="#a8cca8"/><rect x="1700" y="334" width="1" height="1" fill="#8fb98f"/><rect x="1699" y="413" width="3" height="1" fill="#a8cca8"/><rect x="1700" y="412" width="1" height="3" fill="#a8cca8"/><rect x="1700" y="413" width="1" height="1" fill="#8fb98f"/><rect x="1699" y="492" width="3" height="1" fill="#a8cca8"/><rect x="1700" y="491" width="1" height="3" fill="#a8cca8"/><rect x="1700" y="492" width="1" height="1" fill="#8fb98f"/><rect x="1699" y="571" width="3" height="1" fill="#a8cca8"/><rect x="1700" y="570" width="1" height="3" fill="#a8cca8"/><rect x="1700" y="571" width="1" height="1" fill="#8fb98f"/><rect x="1699" y="650" width="3" height="1" fill="#a8cca8"/><rect x="1700" y="649" width="1" height="3" fill="#a8cca8"/><rect x="1700" y="650" width="1" height="1" fill="#8fb98f"/><rect x="1699" y="729" width="3" height="1" fill="#a8cca8"/><rect x="1700" y="728" width="1" height="3" fill="#a8cca8"/><rect x="1700" y="729" width="1" height="1" fill="#8fb98f"/><rect x="1787" y="176" width="3" height="1" fill="#a8cca8"/><rect x="1788" y="175" width="1" height="3" fill="#a8cca8"/><rect x="1788" y="176" width="1" height="1" fill="#8fb98f"/><rect x="1787" y="255" width="3" height="1" fill="#a8cca8"/><rect x="1788" y="254" width="1" height="3" fill="#a8cca8"/><rect x="1788" y="255" width="1" height="1" fill="#8fb98f"/><rect x="1787" y="334" width="3" height="1" fill="#a8cca8"/><rect x="1788" y="333" width="1" height="3" fill="#a8cca8"/><rect x="1788" y="334" width="1" height="1" fill="#8fb98f"/><rect x="1787" y="413" width="3" height="1" fill="#a8cca8"/><rect x="1788" y="412" width="1" height="3" fill="#a8cca8"/><rect x="1788" y="413" width="1" height="1" fill="#8fb98f"/><rect x="1787" y="492" width="3" height="1" fill="#a8cca8"/><rect x="1788" y="491" width="1" height="3" fill="#a8cca8"/><rect x="1788" y="492" width="1" height="1" fill="#8fb98f"/><rect x="1787" y="571" width="3" height="1" fill="#a8cca8"/><rect x="1788" y="570" width="1" height="3" fill="#a8cca8"/><rect x="1788" y="571" width="1" height="1" fill="#8fb98f"/><rect x="1787" y="650" width="3" height="1" fill="#a8cca8"/><rect x="1788" y="649" width="1" height="3" fill="#a8cca8"/><rect x="1788" y="650" width="1" height="1" fill="#8fb98f"/><rect x="1787" y="729" width="3" height="1" fill="#a8cca8"/><rect x="1788" y="728" width="1" height="3" fill="#a8cca8"/><rect x="1788" y="729" width="1" height="1" fill="#8fb98f"/><rect x="1875" y="176" width="3" height="1" fill="#a8cca8"/><rect x="1876" y="175" width="1" height="3" fill="#a8cca8"/><rect x="1876" y="176" width="1" height="1" fill="#8fb98f"/><rect x="1875" y="255" width="3" height="1" fill="#a8cca8"/><rect x="1876" y="254" width="1" height="3" fill="#a8cca8"/><rect x="1876" y="255" width="1" height="1" fill="#8fb98f"/><rect x="1875" y="334" width="3" height="1" fill="#a8cca8"/><rect x="1876" y="333" width="1" height="3" fill="#a8cca8"/><rect x="1876" y="334" width="1" height="1" fill="#8fb98f"/><rect x="1875" y="413" width="3" height="1" fill="#a8cca8"/><rect x="1876" y="412" width="1" height="3" fill="#a8cca8"/><rect x="1876" y="413" width="1" height="1" fill="#8fb98f"/><rect x="1875" y="492" width="3" height="1" fill="#a8cca8"/><rect x="1876" y="491" width="1" height="3" fill="#a8cca8"/><rect x="1876" y="492" width="1" height="1" fill="#8fb98f"/><rect x="1875" y="571" width="3" height="1" fill="#a8cca8"/><rect x="1876" y="570" width="1" height="3" fill="#a8cca8"/><rect x="1876" y="571" width="1" height="1" fill="#8fb98f"/><rect x="1875" y="650" width="3" height="1" fill="#a8cca8"/><rect x="1876" y="649" width="1" height="3" fill="#a8cca8"/><rect x="1876" y="650" width="1" height="1" fill="#8fb98f"/><rect x="1875" y="729" width="3" height="1" fill="#a8cca8"/><rect x="1876" y="728" width="1" height="3" fill="#a8cca8"/><rect x="1876" y="729" width="1" height="1" fill="#8fb98f"/><rect x="374" y="176" width="1" height="600" fill="#a0a0a0"/><rect x="379" y="176" width="1" height="600" fill="#1c8c1c"/><rect x="732" y="176" width="1" height="448" fill="#000"/><rect x="820" y="176" width="1" height="53" fill="#000"/><rect x="908" y="176" width="1" height="53" fill="#000"/><rect x="820" y="228" width="39" height="1" fill="#000"/><rect x="870" y="228" width="39" height="1" fill="#000"/><rect x="858" y="222" width="1" height="13" fill="#000"/><rect x="870" y="222" width="1" height="13" fill="#000"/><rect x="732" y="307" width="5" height="1" fill="#000"/><rect x="736" y="301" width="80" height="1" fill="#000"/><rect x="736" y="489" width="80" height="1" fill="#000"/><rect x="736" y="301" width="1" height="189" fill="#000"/><rect x="815" y="301" width="1" height="189" fill="#000"/><rect x="736" y="334" width="80" height="1" fill="#000"/><rect x="763" y="413" width="27" height="1" fill="#000"/><rect x="815" y="307" width="10" height="1" fill="#000"/><rect x="820" y="307" width="1" height="238" fill="#000"/><rect x="824" y="301" width="80" height="1" fill="#000"/><rect x="824" y="489" width="80" height="1" fill="#000"/><rect x="824" y="301" width="1" height="189" fill="#000"/><rect x="903" y="301" width="1" height="189" fill="#000"/><rect x="824" y="334" width="80" height="1" fill="#000"/><rect x="851" y="413" width="27" height="1" fill="#000"/><rect x="903" y="307" width="44" height="1" fill="#000"/><rect x="908" y="307" width="1" height="238" fill="#000"/><rect x="820" y="544" width="39" height="1" fill="#000"/><rect x="870" y="544" width="39" height="1" fill="#000"/><rect x="858" y="538" width="1" height="13" fill="#000"/><rect x="870" y="538" width="1" height="13" fill="#000"/><rect x="946" y="301" width="1" height="13" fill="#000"/><rect x="958" y="301" width="1" height="13" fill="#000"/><path d="M946.5 313.5 L958.5 301.5" stroke="#000" stroke-width="1" shape-rendering="auto" fill="none"/><rect x="958" y="307" width="77" height="1" fill="#000"/><rect x="1034" y="301" width="1" height="13" fill="#000"/><rect x="1046" y="301" width="1" height="13" fill="#000"/><rect x="1046" y="307" width="77" height="1" fill="#000"/><rect x="1122" y="301" width="1" height="13" fill="#000"/><rect x="1134" y="301" width="1" height="13" fill="#000"/><path d="M1122.5 313.5 L1134.5 301.5" stroke="#000" stroke-width="1" shape-rendering="auto" fill="none"/><rect x="1134" y="307" width="77" height="1" fill="#000"/><rect x="1211" y="301" width="11" height="13" fill="#33ee33"/><rect x="1210" y="301" width="1" height="13" fill="#000"/><rect x="1222" y="301" width="1" height="13" fill="#000"/><path d="M1210.5 313.5 L1222.5 301.5" stroke="#000" stroke-width="1" shape-rendering="auto" fill="none"/><rect x="1222" y="307" width="77" height="1" fill="#000"/><rect x="1299" y="301" width="11" height="13" fill="#33ee33"/><rect x="1298" y="301" width="1" height="13" fill="#000"/><rect x="1310" y="301" width="1" height="13" fill="#000"/><path d="M1298.5 313.5 L1310.5 301.5" stroke="#000" stroke-width="1" shape-rendering="auto" fill="none"/><rect x="1310" y="307" width="77" height="1" fill="#000"/><rect x="1386" y="301" width="1" height="13" fill="#000"/><rect x="1398" y="301" width="1" height="13" fill="#000"/><path d="M1386.5 313.5 L1398.5 301.5" stroke="#000" stroke-width="1" shape-rendering="auto" fill="none"/><rect x="1398" y="307" width="43" height="1" fill="#000"/><rect x="1084" y="307" width="1" height="80" fill="#000"/><rect x="908" y="386" width="39" height="1" fill="#000"/><rect x="958" y="386" width="127" height="1" fill="#000"/><rect x="946" y="380" width="1" height="13" fill="#000"/><rect x="958" y="380" width="1" height="13" fill="#000"/><rect x="1440" y="301" width="80" height="1" fill="#000"/><rect x="1440" y="489" width="80" height="1" fill="#000"/><rect x="1440" y="301" width="1" height="189" fill="#000"/><rect x="1519" y="301" width="1" height="189" fill="#000"/><rect x="1440" y="334" width="80" height="1" fill="#000"/><rect x="1467" y="413" width="27" height="1" fill="#000"/><rect x="1519" y="307" width="5" height="1" fill="#000"/><rect x="1523" y="303" width="1" height="9" fill="#000"/><rect x="732" y="623" width="5" height="1" fill="#000"/><rect x="736" y="617" width="80" height="1" fill="#000"/><rect x="736" y="805" width="80" height="1" fill="#000"/><rect x="736" y="617" width="1" height="189" fill="#000"/><rect x="815" y="617" width="1" height="189" fill="#000"/><rect x="736" y="650" width="80" height="1" fill="#000"/><rect x="763" y="729" width="27" height="1" fill="#000"/><rect x="815" y="623" width="10" height="1" fill="#000"/><rect x="820" y="623" width="1" height="238" fill="#000"/><rect x="824" y="617" width="80" height="1" fill="#000"/><rect x="824" y="805" width="80" height="1" fill="#000"/><rect x="824" y="617" width="1" height="189" fill="#000"/><rect x="903" y="617" width="1" height="189" fill="#000"/><rect x="824" y="650" width="80" height="1" fill="#000"/><rect x="851" y="729" width="27" height="1" fill="#000"/><rect x="903" y="623" width="44" height="1" fill="#000"/><rect x="908" y="623" width="1" height="238" fill="#000"/><rect x="820" y="860" width="39" height="1" fill="#000"/><rect x="870" y="860" width="39" height="1" fill="#000"/><rect x="858" y="854" width="1" height="13" fill="#000"/><rect x="870" y="854" width="1" height="13" fill="#000"/><rect x="946" y="617" width="1" height="13" fill="#000"/><rect x="958" y="617" width="1" height="13" fill="#000"/><path d="M946.5 629.5 L958.5 617.5" stroke="#000" stroke-width="1" shape-rendering="auto" fill="none"/><rect x="958" y="623" width="77" height="1" fill="#000"/><rect x="1034" y="617" width="1" height="13" fill="#000"/><rect x="1046" y="617" width="1" height="13" fill="#000"/><rect x="1046" y="623" width="77" height="1" fill="#000"/><rect x="1123" y="617" width="11" height="13" fill="#33ee33"/><rect x="1122" y="617" width="1" height="13" fill="#000"/><rect x="1134" y="617" width="1" height="13" fill="#000"/><path d="M1122.5 629.5 L1134.5 617.5" stroke="#000" stroke-width="1" shape-rendering="auto" fill="none"/><rect x="1134" y="623" width="77" height="1" fill="#000"/><rect x="1211" y="617" width="11" height="13" fill="#33ee33"/><rect x="1210" y="617" width="1" height="13" fill="#000"/><rect x="1222" y="617" width="1" height="13" fill="#000"/><path d="M1210.5 629.5 L1222.5 617.5" stroke="#000" stroke-width="1" shape-rendering="auto" fill="none"/><rect x="1222" y="623" width="77" height="1" fill="#000"/><rect x="1299" y="617" width="11" height="13" fill="#33ee33"/><rect x="1298" y="617" width="1" height="13" fill="#000"/><rect x="1310" y="617" width="1" height="13" fill="#000"/><path d="M1298.5 629.5 L1310.5 617.5" stroke="#000" stroke-width="1" shape-rendering="auto" fill="none"/><rect x="1310" y="623" width="77" height="1" fill="#000"/><rect x="1386" y="617" width="1" height="13" fill="#000"/><rect x="1398" y="617" width="1" height="13" fill="#000"/><path d="M1386.5 629.5 L1398.5 617.5" stroke="#000" stroke-width="1" shape-rendering="auto" fill="none"/><rect x="1398" y="623" width="43" height="1" fill="#000"/><rect x="1084" y="623" width="1" height="80" fill="#000"/><rect x="908" y="702" width="39" height="1" fill="#000"/><rect x="958" y="702" width="127" height="1" fill="#000"/><rect x="946" y="696" width="1" height="13" fill="#000"/><rect x="958" y="696" width="1" height="13" fill="#000"/><rect x="1440" y="617" width="80" height="1" fill="#000"/><rect x="1440" y="805" width="80" height="1" fill="#000"/><rect x="1440" y="617" width="1" height="189" fill="#000"/><rect x="1519" y="617" width="1" height="189" fill="#000"/><rect x="1440" y="650" width="80" height="1" fill="#000"/><rect x="1467" y="729" width="27" height="1" fill="#000"/><rect x="1519" y="623" width="5" height="1" fill="#000"/><rect x="1523" y="619" width="1" height="9" fill="#000"/></svg>
<div style="left:308px;top:176px;width:1589px;height:600px;overflow:hidden;"><div class="t cm" style="left:516px;top:17px;">自动上料任<br>务</div><div class="t ad" style="left:512px;top:62px;width:88px;text-align:center;">W509.00</div><div class="t ss" style="left:428px;top:135px;width:80px;text-align:center;">=S(302)</div><div class="t cm" style="left:431px;top:176px;">机械手任务<br><span class="l">(1-15...</span></div><div class="t ss k" style="left:428px;top:205px;width:80px;text-align:center;"><span class="l">(</span>错误<span class="l">)</span></div><div class="t ad" style="left:428px;top:222px;width:80px;text-align:center;">D100</div><div class="t ad" style="left:428px;top:301px;width:80px;text-align:center;">&amp;0</div><div class="t ss" style="left:516px;top:135px;width:80px;text-align:center;">=S(302)</div><div class="t cm" style="left:519px;top:176px;">手动选择化<br>成夹具</div><div class="t ss k" style="left:516px;top:205px;width:80px;text-align:center;"><span class="l">(</span>错误<span class="l">)</span></div><div class="t ad" style="left:516px;top:222px;width:80px;text-align:center;">D110</div><div class="t ad" style="left:516px;top:301px;width:80px;text-align:center;">&amp;14</div><div class="t cm" style="left:516px;top:333px;">自动上料任<br>务</div><div class="t ad" style="left:512px;top:378px;width:88px;text-align:center;">W509.00</div><div class="t ad" style="left:600px;top:141px;width:88px;text-align:center;">H12.10</div><div class="t cm" style="left:600px;top:96px;width:88px;text-align:center;">扫描屏蔽</div><div class="t ad" style="left:688px;top:141px;width:88px;text-align:center;">H8.13</div><div class="t cm" style="left:688px;top:96px;width:88px;text-align:center;">物料移动<span class="l">14</span></div><div class="t ad" style="left:776px;top:141px;width:88px;text-align:center;">H0.13</div><div class="t cm" style="left:780px;top:96px;">屏蔽热夹具<br><span class="l">14</span></div><div class="t ad" style="left:864px;top:141px;width:88px;text-align:center;">W507.10</div><div class="t cm" style="left:868px;top:96px;"><span class="l">#14</span>高温报<br>警</div><div class="t ad" style="left:952px;top:141px;width:88px;text-align:center;">W507.11</div><div class="t cm" style="left:956px;top:96px;"><span class="l">#14</span>低温报<br>警</div><div class="t ad" style="left:1040px;top:141px;width:88px;text-align:center;">H2.13</div><div class="t cm" style="left:1044px;top:96px;">热夹具<span class="l">14</span>有<br>料</div><div class="t ad" style="left:600px;top:220px;width:88px;text-align:center;">H12.10</div><div class="t cm" style="left:600px;top:175px;width:88px;text-align:center;">扫描屏蔽</div><div class="t ss" style="left:1132px;top:135px;width:80px;text-align:center;">MOV(021)</div><div class="t ad" style="left:1132px;top:222px;width:80px;text-align:center;">&amp;14</div><div class="t ss k" style="left:1132px;top:284px;width:80px;text-align:center;"><span class="l">(</span>错误<span class="l">)</span></div><div class="t ad" style="left:1132px;top:300px;width:80px;text-align:center;">D100</div><div class="t ss k" style="left:1227px;top:135px;">传送</div><div class="t ss k" style="left:1227px;top:222px;">源字</div><div class="t cm" style="left:1227px;top:239px;width:px;white-space:nowrap;">机械手任务<span class="l">(1-15</span>是上料任务，<span class="l">41-55</span>是冷压任务，<span class="l">81</span>是</div><div class="t ss k" style="left:1227px;top:300px;">目标</div><div class="t ss" style="left:428px;top:451px;width:80px;text-align:center;">=S(302)</div><div class="t cm" style="left:431px;top:492px;">机械手任务<br><span class="l">(1-15...</span></div><div class="t ss k" style="left:428px;top:521px;width:80px;text-align:center;"><span class="l">(</span>错误<span class="l">)</span></div><div class="t ad" style="left:428px;top:538px;width:80px;text-align:center;">D100</div><div class="t ad" style="left:428px;top:617px;width:80px;text-align:center;">&amp;0</div><div class="t ss" style="left:516px;top:451px;width:80px;text-align:center;">=S(302)</div><div class="t cm" style="left:519px;top:492px;">手动选择化<br>成夹具</div><div class="t ss k" style="left:516px;top:521px;width:80px;text-align:center;"><span class="l">(</span>错误<span class="l">)</span></div><div class="t ad" style="left:516px;top:538px;width:80px;text-align:center;">D110</div><div class="t ad" style="left:516px;top:617px;width:80px;text-align:center;">&amp;15</div><div class="t cm" style="left:516px;top:649px;">自动上料任<br>务</div><div class="t ad" style="left:512px;top:694px;width:88px;text-align:center;">W509.00</div><div class="t ad" style="left:600px;top:457px;width:88px;text-align:center;">H12.10</div><div class="t cm" style="left:600px;top:412px;width:88px;text-align:center;">扫描屏蔽</div><div class="t ad" style="left:688px;top:457px;width:88px;text-align:center;">H8.14</div><div class="t cm" style="left:688px;top:412px;width:88px;text-align:center;">物料移动<span class="l">15</span></div><div class="t ad" style="left:776px;top:457px;width:88px;text-align:center;">H0.14</div><div class="t cm" style="left:780px;top:412px;">屏蔽热夹具<br><span class="l">15</span></div><div class="t ad" style="left:864px;top:457px;width:88px;text-align:center;">W507.12</div><div class="t cm" style="left:868px;top:412px;"><span class="l">#15</span>高温报<br>警</div><div class="t ad" style="left:952px;top:457px;width:88px;text-align:center;">W507.13</div><div class="t cm" style="left:956px;top:412px;"><span class="l">#15</span>低温报<br>警</div><div class="t ad" style="left:1040px;top:457px;width:88px;text-align:center;">H2.14</div><div class="t cm" style="left:1044px;top:412px;">热夹具<span class="l">15</span>有<br>料</div><div class="t ad" style="left:600px;top:536px;width:88px;text-align:center;">H12.10</div><div class="t cm" style="left:600px;top:491px;width:88px;text-align:center;">扫描屏蔽</div><div class="t ss" style="left:1132px;top:451px;width:80px;text-align:center;">MOV(021)</div><div class="t ad" style="left:1132px;top:538px;width:80px;text-align:center;">&amp;15</div><div class="t ss k" style="left:1132px;top:600px;width:80px;text-align:center;"><span class="l">(</span>错误<span class="l">)</span></div><div class="t ad" style="left:1132px;top:616px;width:80px;text-align:center;">D100</div><div class="t ss k" style="left:1227px;top:451px;">传送</div><div class="t ss k" style="left:1227px;top:538px;">源字</div><div class="t cm" style="left:1227px;top:555px;width:px;white-space:nowrap;">机械手任务<span class="l">(1-15</span>是上料任务，<span class="l">41-55</span>是冷压任务，<span class="l">81</span>是</div><div class="t ss k" style="left:1227px;top:616px;">目标</div></div>
<div style="left:1897px;top:176px;width:21px;height:600px;background:#f8f8f8;"></div>
<div style="left:1897px;top:176px;width:21px;height:7px;background:#f0f0f0;border:1px solid;border-color:#fff #696969 #696969 #fff;"></div>
<div style="left:1897px;top:183px;width:21px;height:21px;background:#f0f0f0;border:1px solid;border-color:#f0f0f0 #696969 #696969 #f0f0f0;box-shadow:inset 1px 1px 0 #fff,inset -1px -1px 0 #a0a0a0;"></div>
<svg style="left:1903px;top:190px" width="9" height="5" viewBox="0 0 9 5"><polygon points="0,5 9,5 4.500,0" fill="#000"/></svg>
<div style="left:1897px;top:546px;width:21px;height:21px;background:#f0f0f0;border:1px solid;border-color:#f0f0f0 #696969 #696969 #f0f0f0;box-shadow:inset 1px 1px 0 #fff,inset -1px -1px 0 #a0a0a0;"></div>
<div style="left:1897px;top:755px;width:21px;height:21px;background:#f0f0f0;border:1px solid;border-color:#f0f0f0 #696969 #696969 #f0f0f0;box-shadow:inset 1px 1px 0 #fff,inset -1px -1px 0 #a0a0a0;"></div>
<svg style="left:1903px;top:763px" width="9" height="5" viewBox="0 0 9 5"><polygon points="0,0 9,0 4.500,5" fill="#000"/></svg>
<div style="left:308px;top:776px;width:1589px;height:21px;background:#f8f8f8;"></div>
<div style="left:308px;top:776px;width:6px;height:21px;background:#f0f0f0;border:1px solid;border-color:#fff #696969 #696969 #fff;"></div>
<div style="left:314px;top:776px;width:21px;height:21px;background:#f0f0f0;border:1px solid;border-color:#f0f0f0 #696969 #696969 #f0f0f0;box-shadow:inset 1px 1px 0 #fff,inset -1px -1px 0 #a0a0a0;"></div>
<svg style="left:321px;top:782px" width="5" height="9" viewBox="0 0 5 9"><polygon points="5,0 5,9 0,4.500" fill="#000"/></svg>
<div style="left:335px;top:776px;width:895px;height:21px;background:#f0f0f0;border:1px solid;border-color:#f0f0f0 #696969 #696969 #f0f0f0;box-shadow:inset 1px 1px 0 #fff,inset -1px -1px 0 #a0a0a0;"></div>
<div style="left:1876px;top:776px;width:21px;height:21px;background:#f0f0f0;border:1px solid;border-color:#f0f0f0 #696969 #696969 #f0f0f0;box-shadow:inset 1px 1px 0 #fff,inset -1px -1px 0 #a0a0a0;"></div>
<svg style="left:1885px;top:782px" width="5" height="9" viewBox="0 0 5 9"><polygon points="0,0 0,9 5,4.500" fill="#000"/></svg>
<div style="left:1897px;top:776px;width:21px;height:21px;background:#f0f0f0;"></div>
<div style="left:306px;top:797px;width:1614px;height:1px;background:#fff;"></div>
<div style="left:307px;top:802px;width:11px;height:11px;background:#c8c8c8;border:1px solid;border-color:#fff #696969 #696969 #fff;"></div>
<div style="left:320px;top:802px;width:11px;height:11px;background:#c8c8c8;border:1px solid;border-color:#fff #696969 #696969 #fff;"></div>
<svg style="left:309px;top:804px" width="7" height="7" viewBox="0 0 7 7"><path d="M0.500 0.500 L6.500 6.500 M6.500 0.500 L0.500 6.500" stroke="#000" stroke-width="1.700"/></svg>
<svg style="left:323px;top:804px" width="4" height="7" viewBox="0 0 4 7"><polygon points="4,0 4,7 0,3.500" fill="#000"/></svg>
<div style="left:334px;top:801px;width:60px;height:20px;background:#f0f0f0;border:1px solid;border-color:#a0a0a0 #fff #fff #a0a0a0;"></div>
<div class="t ui" style="left:399px;top:803px;font-size:15px;line-height:18px;">名称:</div>
<div style="left:437px;top:801px;width:554px;height:19px;background:#ff0;border:1px solid;border-color:#a0a0a0 #ff0 #ff0 #a0a0a0;"></div>
<div class="t ui" style="left:997px;top:803px;font-size:15px;line-height:18px;">地址值:</div>
<div style="left:1050px;top:801px;width:70px;height:19px;background:#ff0;border:1px solid;border-color:#a0a0a0 #ff0 #ff0 #a0a0a0;"></div>
<div class="t ui" style="left:1053px;top:803px;font-size:15px;line-height:18px;">&amp;1</div>
<div class="t ui" style="left:1126px;top:803px;font-size:15px;line-height:18px;">注释:</div>
<div style="left:1164px;top:801px;width:755px;height:19px;background:#ff0;border:1px solid;border-color:#a0a0a0 #ff0 #ff0 #a0a0a0;"></div>
<div style="left:0px;top:824px;width:1920px;height:1px;background:#fff;"></div>
<div style="left:0px;top:825px;width:1920px;height:2px;background:#828282;"></div>
<div style="left:0px;top:827px;width:1920px;height:1px;background:#d4d4d4;"></div>
<div style="left:4px;top:831px;width:12px;height:11px;background:#c8c8c8;border:1px solid;border-color:#fff #696969 #696969 #fff;"></div>
<svg style="left:6px;top:833px" width="7" height="7" viewBox="0 0 7 7"><path d="M0.500 0.500 L6.500 6.500 M6.500 0.500 L0.500 6.500" stroke="#000" stroke-width="1.700"/></svg>
<div style="left:4px;top:843px;width:12px;height:11px;background:#f0f0f0;border:1px solid;border-color:#fff #a0a0a0 #a0a0a0 #fff;"></div>
<svg style="left:9px;top:845px" width="4" height="7" viewBox="0 0 4 7"><polygon points="0,0 0,7 4,3.500" fill="#a0a0a0"/></svg>
<div style="left:8px;top:857px;width:1px;height:143px;background:#fff;"></div>
<div style="left:9px;top:857px;width:1px;height:144px;background:#a0a0a0;"></div>
<div style="left:12px;top:857px;width:1px;height:143px;background:#fff;"></div>
<div style="left:13px;top:857px;width:1px;height:144px;background:#a0a0a0;"></div>
<div style="left:18px;top:829px;width:1898px;height:174px;background:#f0f0f0;border:1px solid;border-color:#828282 #fff #fff #828282;"></div>
<div style="left:19px;top:830px;width:1896px;height:1px;background:#696969;"></div>
<div style="left:19px;top:830px;width:1px;height:171px;background:#696969;"></div>
<div style="left:20px;top:831px;width:82px;height:23px;background:#f0f0f0;border:1px solid;border-color:#fff #a0a0a0 #a0a0a0 #fff;"></div>
<div class="t ui" style="left:26px;top:835px;font-size:15px;line-height:18px;">PLC名称</div>
<div style="left:102px;top:831px;width:60px;height:23px;background:#f0f0f0;border:1px solid;border-color:#fff #a0a0a0 #a0a0a0 #fff;"></div>
<div class="t ui" style="left:108px;top:835px;font-size:15px;line-height:18px;">名称</div>
<div style="left:162px;top:831px;width:126px;height:23px;background:#f0f0f0;border:1px solid;border-color:#fff #a0a0a0 #a0a0a0 #fff;"></div>
<div class="t ui" style="left:168px;top:835px;font-size:15px;line-height:18px;">地址</div>
<div style="left:288px;top:831px;width:207px;height:23px;background:#f0f0f0;border:1px solid;border-color:#fff #a0a0a0 #a0a0a0 #fff;"></div>
<div class="t ui" style="left:294px;top:835px;font-size:15px;line-height:18px;">数据类型/格式</div>
<div style="left:495px;top:831px;width:60px;height:23px;background:#f0f0f0;border:1px solid;border-color:#fff #a0a0a0 #a0a0a0 #fff;"></div>
<div class="t ui" style="left:501px;top:835px;font-size:15px;line-height:18px;">功能...</div>
<div style="left:555px;top:831px;width:73px;height:23px;background:#f0f0f0;border:1px solid;border-color:#fff #a0a0a0 #a0a0a0 #fff;"></div>
<div class="t ui" style="left:561px;top:835px;font-size:15px;line-height:18px;">值</div>
<div style="left:628px;top:831px;width:60px;height:23px;background:#f0f0f0;border:1px solid;border-color:#fff #a0a0a0 #a0a0a0 #fff;"></div>
<div class="t ui" style="left:634px;top:835px;font-size:15px;line-height:18px;">值(二...</div>
<div style="left:688px;top:831px;width:60px;height:23px;background:#f0f0f0;border:1px solid;border-color:#fff #a0a0a0 #a0a0a0 #fff;"></div>
<div class="t ui" style="left:694px;top:835px;font-size:15px;line-height:18px;">注释</div>
<div style="left:748px;top:831px;width:1167px;height:23px;background:#f0f0f0;border:1px solid;border-color:#fff #a0a0a0 #a0a0a0 #fff;"></div>
<div style="left:20px;top:856px;width:1895px;height:124px;background:#cce8cf;"></div>
<div style="left:20px;top:877px;width:1895px;height:1px;background:#e9f5ea;"></div>
<div style="left:20px;top:898px;width:1895px;height:1px;background:#e9f5ea;"></div>
<div style="left:20px;top:919px;width:1895px;height:1px;background:#e9f5ea;"></div>
<div style="left:20px;top:940px;width:1895px;height:1px;background:#e9f5ea;"></div>
<div style="left:20px;top:961px;width:1895px;height:1px;background:#e9f5ea;"></div>
<div style="left:103px;top:856px;width:1px;height:124px;background:#e9f5ea;"></div>
<div style="left:163px;top:856px;width:1px;height:124px;background:#e9f5ea;"></div>
<div style="left:289px;top:856px;width:1px;height:124px;background:#e9f5ea;"></div>
<div style="left:496px;top:856px;width:1px;height:124px;background:#e9f5ea;"></div>
<div style="left:556px;top:856px;width:1px;height:124px;background:#e9f5ea;"></div>
<div style="left:629px;top:856px;width:1px;height:124px;background:#e9f5ea;"></div>
<div style="left:689px;top:856px;width:1px;height:124px;background:#e9f5ea;"></div>
<div style="left:749px;top:856px;width:1px;height:124px;background:#e9f5ea;"></div>
<div style="left:20px;top:854px;width:1895px;height:2px;background:#f0f0f0;"></div>
<div style="left:21px;top:879px;width:82px;height:19px;background:#0078d7;"></div>
<div style="left:104px;top:879px;width:59px;height:19px;background:#0078d7;"></div>
<div style="left:164px;top:878px;width:125px;height:20px;background:#f0f0f0;border-top:1px dotted #555;"></div>
<div style="left:290px;top:879px;width:206px;height:19px;background:#0078d7;"></div>
<div style="left:497px;top:879px;width:59px;height:19px;background:#0078d7;"></div>
<div style="left:557px;top:879px;width:72px;height:19px;background:#0078d7;"></div>
<div style="left:630px;top:879px;width:59px;height:19px;background:#0078d7;"></div>
<div style="left:690px;top:879px;width:59px;height:19px;background:#0078d7;"></div>
<div class="t ui" style="left:24px;top:859px;font-size:15px;line-height:18px;">新PLC1</div>
<div class="t ui" style="left:169px;top:859px;font-size:15px;line-height:18px;letter-spacing:0.4px;">A280.05</div>
<div class="t ui" style="left:295px;top:859px;font-size:15px;line-height:18px;letter-spacing:0.3px;">BOOL (On/Off,接点)</div>
<div class="t ui" style="left:562px;top:859px;font-size:15px;line-height:18px;">(错误)</div>
<div class="t ui" style="left:635px;top:859px;font-size:15px;line-height:18px;">(错误)</div>
<div class="t ui" style="left:695px;top:859px;font-size:15px;line-height:18px;">原点...</div>
<div class="t ui" style="left:24px;top:880px;font-size:15px;line-height:18px;color:#fff;">新PLC1</div>
<div class="t ui" style="left:171px;top:880px;font-size:15px;line-height:18px;letter-spacing:0.4px;">1.02</div>
<div class="t ui" style="left:295px;top:880px;font-size:15px;line-height:18px;color:#fff;letter-spacing:0.3px;">BOOL (On/Off,接点)</div>
<div class="t ui" style="left:562px;top:880px;font-size:15px;line-height:18px;color:#fff;">(错误)</div>
<div class="t ui" style="left:635px;top:880px;font-size:15px;line-height:18px;color:#fff;">(错误)</div>
<div class="t ui" style="left:695px;top:880px;font-size:15px;line-height:18px;color:#fff;">天车...</div>
<div class="t ui" style="left:24px;top:901px;font-size:15px;line-height:18px;">新PLC1</div>
<div class="t ui" style="left:169px;top:901px;font-size:15px;line-height:18px;letter-spacing:0.4px;">W0.04</div>
<div class="t ui" style="left:295px;top:901px;font-size:15px;line-height:18px;letter-spacing:0.3px;">BOOL (On/Off,接点)</div>
<div class="t ui" style="left:562px;top:901px;font-size:15px;line-height:18px;">(错误)</div>
<div class="t ui" style="left:635px;top:901px;font-size:15px;line-height:18px;">(错误)</div>
<div class="t ui" style="left:695px;top:901px;font-size:15px;line-height:18px;">门禁...</div>
<div class="t ui" style="left:24px;top:922px;font-size:15px;line-height:18px;">新PLC1</div>
<div class="t ui" style="left:169px;top:922px;font-size:15px;line-height:18px;letter-spacing:0.4px;">W0.06</div>
<div class="t ui" style="left:295px;top:922px;font-size:15px;line-height:18px;letter-spacing:0.3px;">BOOL (On/Off,接点)</div>
<div class="t ui" style="left:562px;top:922px;font-size:15px;line-height:18px;">(错误)</div>
<div class="t ui" style="left:635px;top:922px;font-size:15px;line-height:18px;">(错误)</div>
<div class="t ui" style="left:695px;top:922px;font-size:15px;line-height:18px;">暂停</div>
<div style="left:20px;top:980px;width:672px;height:21px;background:#f0f0f0;"></div>
<div style="left:108px;top:980px;width:584px;height:1px;background:#000;"></div>
<div style="left:691px;top:980px;width:1px;height:21px;background:#000;"></div>
<div style="left:20px;top:981px;width:22px;height:20px;background:#f0f0f0;border:1px solid;border-color:#f0f0f0 #696969 #696969 #f0f0f0;box-shadow:inset 1px 1px 0 #fff,inset -1px -1px 0 #a0a0a0;"></div>
<div style="left:42px;top:981px;width:22px;height:20px;background:#f0f0f0;border:1px solid;border-color:#f0f0f0 #696969 #696969 #f0f0f0;box-shadow:inset 1px 1px 0 #fff,inset -1px -1px 0 #a0a0a0;"></div>
<div style="left:64px;top:981px;width:22px;height:20px;background:#f0f0f0;border:1px solid;border-color:#f0f0f0 #696969 #696969 #f0f0f0;box-shadow:inset 1px 1px 0 #fff,inset -1px -1px 0 #a0a0a0;"></div>
<div style="left:86px;top:981px;width:22px;height:20px;background:#f0f0f0;border:1px solid;border-color:#f0f0f0 #696969 #696969 #f0f0f0;box-shadow:inset 1px 1px 0 #fff,inset -1px -1px 0 #a0a0a0;"></div>
<svg style="left:20px;top:981px" width="88" height="20" viewBox="0 0 88 20">
<g fill="#a0a0a0"><rect x="6" y="4" width="2" height="12"/><polygon points="16,4 16,16 9,10"/>
<polygon points="37,4 37,16 29,10"/><polygon points="51,4 51,16 59,10"/>
<polygon points="72,4 72,16 79,10"/><rect x="80" y="4" width="2" height="12"/></g></svg>
<svg style="left:108px;top:980px" width="200" height="21" viewBox="0 0 200 21">
<path d="M0 0 L6 20 H58 L64 0 Z" fill="#cce8cf"/>
<path d="M0 0.500 L6.500 20 H58 L64.500 0.500" fill="none" stroke="#000" stroke-width="1.100"/>
<path d="M64.500 0.500 L70.500 20 H122 L128.500 0.500 L134.500 20 H186 L192.500 0.500" fill="none" stroke="#000" stroke-width="1.100"/>
</svg>
<div class="t ss" style="left:118px;top:984px;font-size:14px;letter-spacing:-0.9px;line-height:16px;">sheet1</div>
<div class="t ss" style="left:182px;top:984px;font-size:14px;letter-spacing:-0.9px;line-height:16px;">sheet2</div>
<div class="t ss" style="left:246px;top:984px;font-size:14px;letter-spacing:-0.9px;line-height:16px;">sheet3</div>
<div style="left:693px;top:980px;width:4px;height:21px;background:#f0f0f0;border-left:1px solid #fff;border-right:1px solid #696969;"></div>
<div style="left:697px;top:980px;width:1218px;height:21px;background:#f8f8f8;"></div>
<div style="left:697px;top:980px;width:18px;height:21px;background:#f0f0f0;border:1px solid;border-color:#f0f0f0 #696969 #696969 #f0f0f0;box-shadow:inset 1px 1px 0 #fff,inset -1px -1px 0 #a0a0a0;"></div>
<svg style="left:703px;top:986px" width="5" height="9" viewBox="0 0 5 9"><polygon points="5,0 5,9 0,4.500" fill="#000"/></svg>
<div style="left:1895px;top:980px;width:20px;height:21px;background:#f0f0f0;border:1px solid;border-color:#f0f0f0 #696969 #696969 #f0f0f0;box-shadow:inset 1px 1px 0 #fff,inset -1px -1px 0 #a0a0a0;"></div>
<svg style="left:1903px;top:986px" width="5" height="9" viewBox="0 0 5 9"><polygon points="0,0 0,9 5,4.500" fill="#000"/></svg>
<div style="left:715px;top:980px;width:1179px;height:21px;background:#f0f0f0;border:1px solid;border-color:#f0f0f0 #696969 #696969 #f0f0f0;box-shadow:inset 1px 1px 0 #fff,inset -1px -1px 0 #a0a0a0;"></div>
<div style="left:0px;top:1006px;width:1920px;height:1px;background:#a0a0a0;"></div>
<div style="left:0px;top:1007px;width:1920px;height:1px;background:#fff;"></div>
<div class="t ui" style="left:2px;top:1013px;font-size:15px;line-height:18px;">需要帮助，请按F1</div>
<div style="left:1070px;top:1010px;width:20px;height:21px;border:1px solid;border-color:#a0a0a0 #fff #fff #a0a0a0;"></div>
<div style="left:1092px;top:1010px;width:65px;height:21px;border:1px solid;border-color:#a0a0a0 #fff #fff #a0a0a0;"></div>
<div style="left:1160px;top:1010px;width:255px;height:21px;border:1px solid;border-color:#a0a0a0 #fff #fff #a0a0a0;"></div>
<div style="left:1418px;top:1010px;width:55px;height:21px;border:1px solid;border-color:#a0a0a0 #fff #fff #a0a0a0;"></div>
<div style="left:1476px;top:1010px;width:55px;height:21px;border:1px solid;border-color:#a0a0a0 #fff #fff #a0a0a0;"></div>
<div style="left:1535px;top:1010px;width:130px;height:21px;border:1px solid;border-color:#a0a0a0 #fff #fff #a0a0a0;"></div>
<div style="left:1668px;top:1010px;width:104px;height:21px;border:1px solid;border-color:#a0a0a0 #fff #fff #a0a0a0;"></div>
<div style="left:1775px;top:1010px;width:61px;height:21px;border:1px solid;border-color:#a0a0a0 #fff #fff #a0a0a0;"></div>
<div style="left:1839px;top:1010px;width:36px;height:21px;border:1px solid;border-color:#a0a0a0 #fff #fff #a0a0a0;"></div>
<div style="left:1878px;top:1010px;width:39px;height:21px;border:1px solid;border-color:#a0a0a0 #fff #fff #a0a0a0;"></div>
<div class="t ui" style="left:1537px;top:1012px;font-size:15px;line-height:18px;white-space:pre;">条 6 (5, 2)  - 100%</div>
<div class="t ui" style="left:1778px;top:1012px;font-size:15px;line-height:18px;">智能</div>
<div class="t ui" style="left:1879px;top:1012px;font-size:15px;line-height:18px;">NUM</div>
<div style="left:0px;top:1030px;width:1920px;height:4px;background:#1c1c1c;"></div>
<div style="left:495px;top:1030px;width:60px;height:4px;background:#4a4a4a;"></div>
<div style="left:1609px;top:987px;width:277px;height:32px;background:#fff;border:1px solid #b7d0f2;border-radius:4px;box-shadow:0 0 2px rgba(80,120,200,.4);"></div>
<svg style="left:1572px;top:980px" width="44" height="42" viewBox="0 0 44 42">
<g transform="rotate(-12 22 21)"><rect x="5" y="5" width="34" height="32" rx="6" fill="#f4511e"/>
<path d="M31 13 Q22 9 15 13 Q10 17 16 20 L28 23 Q33 26 27 29 Q19 32 11 28" fill="none" stroke="#fff" stroke-width="4.500" stroke-linecap="round"/></g></svg>
<div class="t ui" style="left:1621px;top:994px;font-size:20px;line-height:20px;font-weight:bold;color:#0b6fe0;">中</div>
<svg style="left:1652px;top:990px" width="230" height="26" viewBox="0 0 230 26">
<circle cx="6" cy="9" r="1.800" fill="none" stroke="#0b6fe0" stroke-width="1.400"/><path d="M13 13 q1.500 0 1.500 2 q0 2 -2.500 3.500" fill="none" stroke="#0b6fe0" stroke-width="2" stroke-linecap="round"/>
<circle cx="39" cy="13" r="9" fill="#0b6fe0"/><circle cx="35.500" cy="10.500" r="1.300" fill="#fff"/><circle cx="42.500" cy="10.500" r="1.300" fill="#fff"/><path d="M34 14.500 Q39 21 44 14.500 Z" fill="#fff"/>
<rect x="65" y="3" width="7" height="13" rx="3.500" fill="#0b6fe0"/><path d="M62 11 Q62 18 68.500 18 Q75 18 75 11" fill="none" stroke="#0b6fe0" stroke-width="1.800"/><path d="M68.500 18 V22 M65 22.500 H72" stroke="#0b6fe0" stroke-width="1.800"/>
<rect x="90" y="6" width="19" height="14" rx="2" fill="#0b6fe0"/><g fill="#fff"><rect x="92.500" y="8.500" width="2" height="2"/><rect x="96" y="8.500" width="2" height="2"/><rect x="99.500" y="8.500" width="2" height="2"/><rect x="103" y="8.500" width="2" height="2"/><rect x="92.500" y="12" width="2" height="2"/><rect x="96" y="12" width="2" height="2"/><rect x="99.500" y="12" width="2" height="2"/><rect x="103" y="12" width="2" height="2"/><rect x="94" y="16" width="11" height="1.800"/></g>
<circle cx="128" cy="8" r="4.500" fill="#0b6fe0"/><path d="M120 21 Q120 13 128 13 Q134 13 135 17 V21 Z" fill="#0b6fe0"/><rect x="131" y="15" width="10" height="8" rx="1.500" fill="#0b6fe0" stroke="#fff" stroke-width="1"/>
<path d="M150 8 L156 3.500 Q159 6.500 162 3.500 L168 8 L164.500 11.500 L163.500 10.500 V21.500 H154.500 V10.500 L153.500 11.500 Z" fill="url(#tg)"/>
<text x="136" y="21.800" font-family="Liberation Sans,sans-serif" font-size="7" font-weight="bold" text-anchor="middle" fill="#fff">19</text>
<defs><linearGradient id="tg" x1="0" x2="1"><stop offset="0" stop-color="#e0457b"/><stop offset="1" stop-color="#6a5cf0"/></linearGradient></defs>
<g fill="#0b6fe0"><rect x="210" y="4" width="7.500" height="7.500" rx="1.500"/><rect x="219.500" y="4" width="7.500" height="7.500" rx="3.700"/><rect x="210" y="13.500" width="7.500" height="7.500" rx="1.500"/><rect x="219.500" y="13.500" width="7.500" height="7.500" rx="1.500"/></g>
</svg>
<div class="t ui" style="left:1831px;top:993px;font-size:20px;line-height:20px;font-weight:bold;color:#0b6fe0;">简</div>
</body></html>
